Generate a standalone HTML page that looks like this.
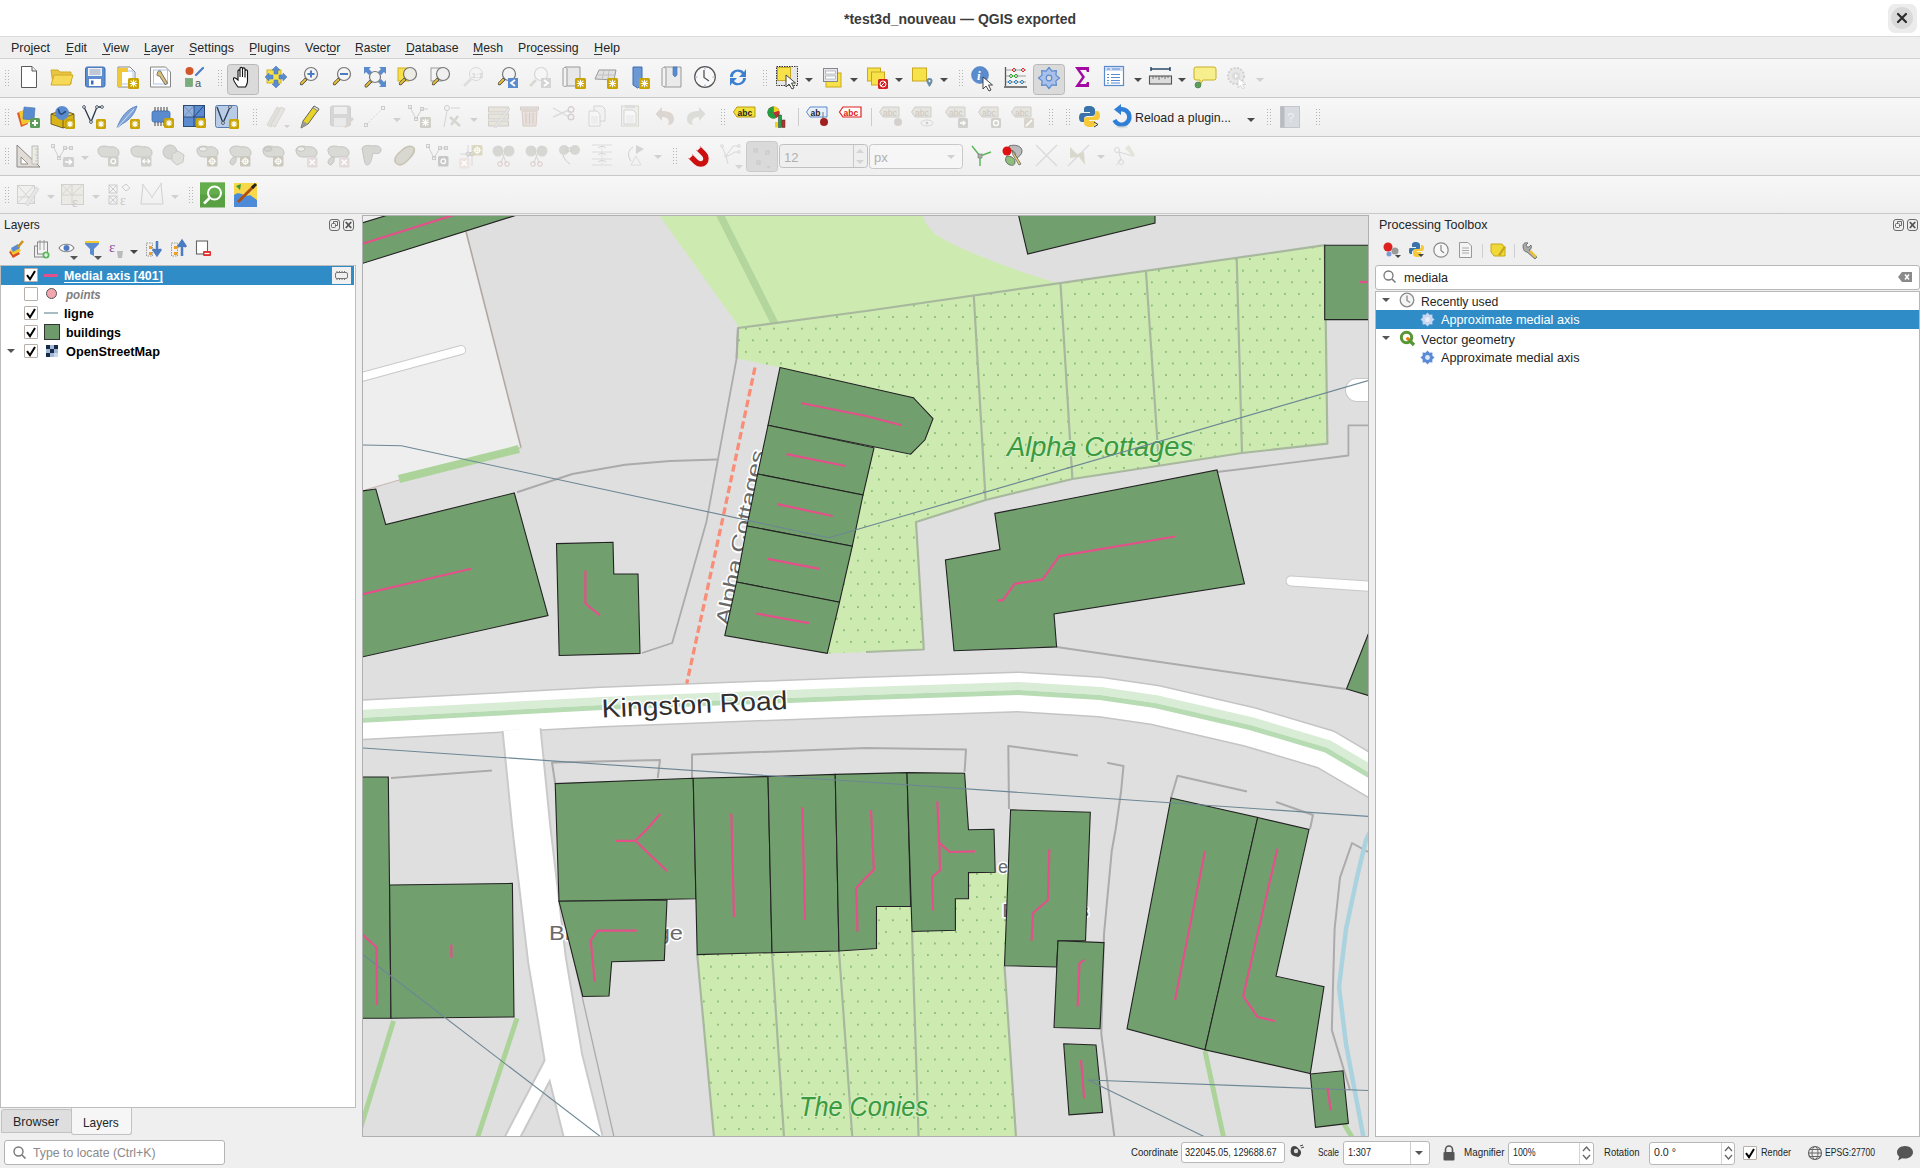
<!DOCTYPE html>
<html><head><meta charset="utf-8">
<style>
*{box-sizing:border-box;margin:0;padding:0}
html,body{width:1920px;height:1168px;overflow:hidden;background:#efefef;font-family:"Liberation Sans",sans-serif;color:#232627;position:relative}
.a{position:absolute}
.t{position:absolute;white-space:nowrap;font-size:13px;line-height:16px}
#title{left:0;top:0;width:1920px;height:37px;background:#fff;border-bottom:1px solid #dcdcdc}
#title .tx{position:absolute;left:0;width:1920px;top:9px;text-align:center;font-size:15px;font-weight:bold;color:#2a2a2a;letter-spacing:0.1px}
#menu{left:0;top:37px;width:1920px;height:22px;background:#efefef;border-bottom:1px solid #d2d2d2}
#menu span{position:absolute;top:3px;font-size:13px;color:#232627}
.tb{left:0;width:1920px;background:linear-gradient(#f7f7f7,#efefef);border-bottom:1px solid #c8c8c8}
.grip{position:absolute;width:3px;height:16px;background-image:radial-gradient(circle,#b0b0b0 0.8px,transparent 1px);background-size:3px 3px}
</style></head><body>
<div class="a" id="title"></div><div class="t" style="left:844.0px;top:11.1px;font-size:15px;line-height:15px;color:#3b3b3b;font-weight:bold;transform:scaleX(0.934);transform-origin:0 0;">*test3d_nouveau — QGIS exported</div>
<div class="a" style="left:1888px;top:4px;width:29px;height:29px;border-radius:7px;background:#ececec"></div><div class="a" style="left:1891px;top:7px;width:22px;height:22px;border-radius:11px;background:#d9d9d9"></div><svg class="a" style="left:1891px;top:7px" width="22" height="22"><path d="M7 7L15 15M15 7L7 15" stroke="#2a2a2a" stroke-width="2.2" stroke-linecap="round"/></svg><div class="a" id="menu"></div><div class="t" style="left:11.0px;top:40.7px;font-size:13px;line-height:13px;color:#232627;transform:scaleX(0.964);transform-origin:0 0;">Project</div>
<div class="t" style="left:65.8px;top:40.7px;font-size:13px;line-height:13px;color:#232627;transform:scaleX(0.938);transform-origin:0 0;">Edit</div>
<div class="t" style="left:102.5px;top:40.7px;font-size:13px;line-height:13px;color:#232627;transform:scaleX(0.931);transform-origin:0 0;">View</div>
<div class="t" style="left:144.0px;top:40.7px;font-size:13px;line-height:13px;color:#232627;transform:scaleX(0.923);transform-origin:0 0;">Layer</div>
<div class="t" style="left:189.0px;top:40.7px;font-size:13px;line-height:13px;color:#232627;transform:scaleX(0.958);transform-origin:0 0;">Settings</div>
<div class="t" style="left:249.0px;top:40.7px;font-size:13px;line-height:13px;color:#232627;transform:scaleX(0.962);transform-origin:0 0;">Plugins</div>
<div class="t" style="left:305.0px;top:40.7px;font-size:13px;line-height:13px;color:#232627;transform:scaleX(0.963);transform-origin:0 0;">Vector</div>
<div class="t" style="left:355.0px;top:40.7px;font-size:13px;line-height:13px;color:#232627;transform:scaleX(0.927);transform-origin:0 0;">Raster</div>
<div class="t" style="left:405.5px;top:40.7px;font-size:13px;line-height:13px;color:#232627;transform:scaleX(0.943);transform-origin:0 0;">Database</div>
<div class="t" style="left:473.0px;top:40.7px;font-size:13px;line-height:13px;color:#232627;transform:scaleX(0.944);transform-origin:0 0;">Mesh</div>
<div class="t" style="left:518.0px;top:40.7px;font-size:13px;line-height:13px;color:#232627;transform:scaleX(0.941);transform-origin:0 0;">Processing</div>
<div class="t" style="left:594.0px;top:40.7px;font-size:13px;line-height:13px;color:#232627;transform:scaleX(0.973);transform-origin:0 0;">Help</div>
<div class="a" style="left:29px;top:54px;width:3.5px;height:1px;background:#3a3a3a"></div><div class="a" style="left:65px;top:54px;width:7px;height:1px;background:#3a3a3a"></div><div class="a" style="left:102px;top:54px;width:8px;height:1px;background:#3a3a3a"></div><div class="a" style="left:144px;top:54px;width:6px;height:1px;background:#3a3a3a"></div><div class="a" style="left:189px;top:54px;width:6px;height:1px;background:#3a3a3a"></div><div class="a" style="left:249.5px;top:54px;width:6.5px;height:1px;background:#3a3a3a"></div><div class="a" style="left:328px;top:54px;width:7.800000000000011px;height:1px;background:#3a3a3a"></div><div class="a" style="left:355px;top:54px;width:7px;height:1px;background:#3a3a3a"></div><div class="a" style="left:405.3px;top:54px;width:8.899999999999977px;height:1px;background:#3a3a3a"></div><div class="a" style="left:473.3px;top:54px;width:9.5px;height:1px;background:#3a3a3a"></div><div class="a" style="left:537px;top:54px;width:5.7999999999999545px;height:1px;background:#3a3a3a"></div><div class="a" style="left:594.2px;top:54px;width:8.299999999999955px;height:1px;background:#3a3a3a"></div><div class="a tb" style="top:59px;height:39px"></div><div class="a tb" style="top:98px;height:39px"></div><div class="a tb" style="top:137px;height:39px"></div><div class="a tb" style="top:176px;height:38px"></div><svg class="a" style="left:0;top:0" width="1920" height="260" viewBox="0 0 1920 260"><rect x="5" y="70" width="1" height="1" fill="#b4b4b4"/><rect x="8" y="70" width="1" height="1" fill="#b4b4b4"/><rect x="5" y="73" width="1" height="1" fill="#b4b4b4"/><rect x="8" y="73" width="1" height="1" fill="#b4b4b4"/><rect x="5" y="76" width="1" height="1" fill="#b4b4b4"/><rect x="8" y="76" width="1" height="1" fill="#b4b4b4"/><rect x="5" y="79" width="1" height="1" fill="#b4b4b4"/><rect x="8" y="79" width="1" height="1" fill="#b4b4b4"/><rect x="5" y="82" width="1" height="1" fill="#b4b4b4"/><rect x="8" y="82" width="1" height="1" fill="#b4b4b4"/><rect x="5" y="85" width="1" height="1" fill="#b4b4b4"/><rect x="8" y="85" width="1" height="1" fill="#b4b4b4"/><g transform="translate(21,66)"><path d="M0.5 0.5H11L15.5 5V21.5H0.5Z" fill="#fff" stroke="#5a5a5a"/><path d="M11 0.5V5H15.5" fill="#eee" stroke="#5a5a5a"/></g>
<g transform="translate(50,66)"><path d="M1 4H8L10 6H21V18H3Z" fill="#e8c547" stroke="#d0aa20"/><path d="M1 19L4 9H23L20 19Z" fill="#f7d95a" stroke="#d0aa20"/></g>
<g transform="translate(85,66)"><rect x="0.5" y="1" width="19.5" height="20" rx="2" fill="#5d8fd0" stroke="#3d6db2"/><rect x="3" y="2" width="14" height="8" fill="#eef2f8"/><path d="M4.5 4H15.5M4.5 6H15.5M4.5 8H15.5" stroke="#7a8aa0" stroke-width="0.8"/><rect x="4" y="13" width="12" height="7" fill="#fff"/><rect x="6" y="14.5" width="2.5" height="4" fill="#3d6db2"/></g>
<g transform="translate(116,66)"><path d="M2 1H14L19 6V21H2Z" fill="#fff" stroke="#888"/><rect x="5" y="5" width="12" height="13" fill="none" stroke="#9ab4e8" stroke-width="0.8"/><rect x="2" y="2" width="4" height="19" fill="#f0c93a"/><rect x="2" y="2" width="10" height="4" fill="#f0c93a"/><rect x="12" y="12" width="11" height="11" rx="1.5" fill="#c9a400"/><path d="M17.5 13.8V21.2M13.8 17.5H21.2M14.6 14.6L20.4 20.4M20.4 14.6L14.6 20.4" stroke="#fff" stroke-width="1.1"/></g>
<g transform="translate(149.5,66)"><path d="M1 1H16L21 6V21H1Z" fill="#fff" stroke="#888"/><rect x="4" y="4" width="14" height="14" fill="none" stroke="#9ab4e8" stroke-width="0.8"/><path d="M8 7C8 4 12 4 12 7L18 17L16 19L10 10C7 10 7 9 8 7Z" fill="#d9c07a" stroke="#555" stroke-width="0.8"/></g>
<g transform="translate(184,66)"><circle cx="5.5" cy="5" r="4" fill="#d1562a"/><path d="M12 9L19 2" stroke="#4d7bc0" stroke-width="2.2" stroke-linecap="round"/><rect x="1.5" y="12.5" width="7" height="8" fill="#7bac7b" stroke="#6a9a6a" stroke-width="0.6"/><text x="11" y="20.5" font-family="Liberation Sans" font-size="11" fill="#555">a</text></g>
<rect x="218" y="70" width="1" height="1" fill="#b4b4b4"/><rect x="221" y="70" width="1" height="1" fill="#b4b4b4"/><rect x="218" y="73" width="1" height="1" fill="#b4b4b4"/><rect x="221" y="73" width="1" height="1" fill="#b4b4b4"/><rect x="218" y="76" width="1" height="1" fill="#b4b4b4"/><rect x="221" y="76" width="1" height="1" fill="#b4b4b4"/><rect x="218" y="79" width="1" height="1" fill="#b4b4b4"/><rect x="221" y="79" width="1" height="1" fill="#b4b4b4"/><rect x="218" y="82" width="1" height="1" fill="#b4b4b4"/><rect x="221" y="82" width="1" height="1" fill="#b4b4b4"/><rect x="218" y="85" width="1" height="1" fill="#b4b4b4"/><rect x="221" y="85" width="1" height="1" fill="#b4b4b4"/><rect x="227.5" y="64.5" width="31" height="30" rx="3" fill="#dadada" stroke="#b9b9b9"/><g transform="translate(232,66)"><path d="M6 21C3 17 1 14 1.5 12.5C2 11 4 12 6 14V5C6 3.5 8 3.5 8 5V11V2.5C8 1 10.5 1 10.5 2.5V11V3C10.5 1.5 13 1.5 13 3V11.5V5C13 3.5 15.5 3.5 15.5 5V15C15.5 18 14 20 13.5 21Z" fill="#fff" stroke="#111" stroke-width="1.1"/></g>
<g transform="translate(265,66)"><rect x="2" y="4" width="14" height="13" fill="#f7e14a" stroke="#d0b020"/><path d="M11 0L15 4H13V8H9V4H7ZM11 22L15 18H13V14H9V18H7ZM0 11L4 7V9H8V13H4V15ZM22 11L18 7V9H14V13H18V15Z" fill="#5b8bcf" stroke="#4371b3" stroke-width="0.5"/></g>
<g transform="translate(297,66)"><path d="M9.45 12.55L4.449999999999999 17.55" stroke="#333" stroke-width="3.2" stroke-linecap="round"/><path d="M8.25 13.75L4.449999999999999 17.55" stroke="#e8c13a" stroke-width="2" stroke-linecap="round"/><circle cx="14" cy="8" r="6.5" fill="#f4f4f4" stroke="#777" stroke-width="1.2"/><path d="M14 4.5V11.5M10.5 8H17.5" stroke="#4d7bc0" stroke-width="2"/></g>
<g transform="translate(330,66)"><path d="M9.45 12.55L4.449999999999999 17.55" stroke="#333" stroke-width="3.2" stroke-linecap="round"/><path d="M8.25 13.75L4.449999999999999 17.55" stroke="#e8c13a" stroke-width="2" stroke-linecap="round"/><circle cx="14" cy="8" r="6.5" fill="#f4f4f4" stroke="#777" stroke-width="1.2"/><path d="M10 8H18" stroke="#4d7bc0" stroke-width="2"/></g>
<g transform="translate(363,66)"><path d="M1 1H8L6 3L9 6L6 9L3 6L1 8ZM23 1H16L18 3L15 6L18 9L21 6L23 8ZM23 21H16L18 19L15 16L18 13L21 16L23 14Z" fill="#5b8bcf"/><path d="M8.15 14.85L3.1500000000000004 19.85" stroke="#333" stroke-width="3.2" stroke-linecap="round"/><path d="M6.95 16.05L3.1500000000000004 19.85" stroke="#e8c13a" stroke-width="2" stroke-linecap="round"/><circle cx="12" cy="11" r="5.5" fill="#f4f4f4" stroke="#777" stroke-width="1.2"/></g>
<g transform="translate(396,66)"><rect x="2" y="2" width="11" height="13" fill="#f7e14a" stroke="#d0b020"/><path d="M9.45 12.55L4.449999999999999 17.55" stroke="#333" stroke-width="3.2" stroke-linecap="round"/><path d="M8.25 13.75L4.449999999999999 17.55" stroke="#e8c13a" stroke-width="2" stroke-linecap="round"/><circle cx="14" cy="8" r="6.5" fill="#ecebe4" stroke="#777" stroke-width="1.2"/></g>
<g transform="translate(429,66)"><rect x="2" y="2" width="11" height="13" fill="#f4f4f4" stroke="#999"/><path d="M9.45 12.55L4.449999999999999 17.55" stroke="#333" stroke-width="3.2" stroke-linecap="round"/><path d="M8.25 13.75L4.449999999999999 17.55" stroke="#e8c13a" stroke-width="2" stroke-linecap="round"/><circle cx="14" cy="8" r="6.5" fill="#f0f0f0" stroke="#777" stroke-width="1.2"/></g>
<g transform="translate(462,66)"><circle cx="14" cy="8" r="6.5" fill="#f4f4f4" stroke="#d8d8d8"/><path d="M2 20L9 13" stroke="#ddd" stroke-width="2.5"/><text x="9.5" y="11.5" font-family="Liberation Sans" font-size="8" font-weight="bold" fill="#d4d4d4">1:1</text></g>
<g transform="translate(495,66)"><path d="M9.45 12.55L4.449999999999999 17.55" stroke="#333" stroke-width="3.2" stroke-linecap="round"/><path d="M8.25 13.75L4.449999999999999 17.55" stroke="#e8c13a" stroke-width="2" stroke-linecap="round"/><circle cx="14" cy="8" r="6.5" fill="#f4f4f4" stroke="#777" stroke-width="1.2"/><rect x="13" y="12" width="10" height="10" fill="#5b8bcf"/><path d="M20 14L16 17L20 20" fill="none" stroke="#fff" stroke-width="1.8"/></g>
<g transform="translate(528,66)"><circle cx="13" cy="8" r="6.5" fill="#f6f6f6" stroke="#d6d6d6" stroke-width="1.2"/><path d="M2 20L8 14" stroke="#d8d8d2" stroke-width="2.5"/><rect x="13" y="12" width="10" height="10" fill="#d4d4d4"/><path d="M16 14L20 17L16 20" fill="none" stroke="#fff" stroke-width="1.8"/></g>
<g transform="translate(562,66)"><path d="M3 1H18V20H3Z" fill="#e8e8e8" stroke="#999"/><path d="M1 3C1 1 5 1 5 3V19C5 21 1 21 1 19Z" fill="#f2f2f2" stroke="#999"/><rect x="13" y="12" width="11" height="11" rx="1.5" fill="#c9a400"/><path d="M18.5 13.8V21.2M14.8 17.5H22.2M15.6 14.6L21.4 20.4M21.4 14.6L15.6 20.4" stroke="#fff" stroke-width="1.1"/></g>
<g transform="translate(594,66)"><path d="M1 13L5 4H22L20 14Z" fill="#e0e0e0" stroke="#999"/><path d="M4 9L21 9M10 4L8 14M15 4L14 14" stroke="#bbb" stroke-width="0.8"/><rect x="13" y="12" width="11" height="11" rx="1.5" fill="#c9a400"/><path d="M18.5 13.8V21.2M14.8 17.5H22.2M15.6 14.6L21.4 20.4M21.4 14.6L15.6 20.4" stroke="#fff" stroke-width="1.1"/></g>
<g transform="translate(632,66)"><path d="M1 1H10V19L5.5 22L1 19Z" fill="#6a99d4" stroke="#3d6db2"/><rect x="7" y="12" width="11" height="11" rx="1.5" fill="#c9a400"/><path d="M12.5 13.8V21.2M8.8 17.5H16.2M9.6 14.6L15.4 20.4M15.4 14.6L9.6 20.4" stroke="#fff" stroke-width="1.1"/></g>
<g transform="translate(661,66)"><path d="M3 1H20V21H3Z" fill="#eaeaea" stroke="#999"/><path d="M1 3C1 1 5 1 5 3V19C5 21 1 21 1 19Z" fill="#f2f2f2" stroke="#999"/><path d="M12 1H16V9L14 11L12 9Z" fill="#5b8bcf" stroke="#3d6db2" stroke-width="0.6"/></g>
<g transform="translate(694,66)"><circle cx="11" cy="11" r="10.3" fill="#f8f8f8" stroke="#555" stroke-width="1.2"/><path d="M10 4V11.5L15 15" fill="none" stroke="#555" stroke-width="1.3"/><circle cx="11" cy="2.8" r="0.6" fill="#4d7bc0"/><circle cx="19.2" cy="11" r="0.6" fill="#4d7bc0"/><circle cx="11" cy="19.2" r="0.6" fill="#4d7bc0"/><circle cx="2.8" cy="11" r="0.6" fill="#4d7bc0"/></g>
<g transform="translate(727,66)"><path d="M3 11C3 4 12 1 17 6L19 3V11H12L15 8C12 4 6 6 6 11Z" fill="#3c7fd0"/><path d="M19 12C19 18 10 22 5 17L3 20V12H10L7 15C10 19 16 17 16 12Z" fill="#3c7fd0"/></g>
<rect x="763" y="70" width="1" height="1" fill="#b4b4b4"/><rect x="766" y="70" width="1" height="1" fill="#b4b4b4"/><rect x="763" y="73" width="1" height="1" fill="#b4b4b4"/><rect x="766" y="73" width="1" height="1" fill="#b4b4b4"/><rect x="763" y="76" width="1" height="1" fill="#b4b4b4"/><rect x="766" y="76" width="1" height="1" fill="#b4b4b4"/><rect x="763" y="79" width="1" height="1" fill="#b4b4b4"/><rect x="766" y="79" width="1" height="1" fill="#b4b4b4"/><rect x="763" y="82" width="1" height="1" fill="#b4b4b4"/><rect x="766" y="82" width="1" height="1" fill="#b4b4b4"/><rect x="763" y="85" width="1" height="1" fill="#b4b4b4"/><rect x="766" y="85" width="1" height="1" fill="#b4b4b4"/><g transform="translate(776,66)"><rect x="0.5" y="0.5" width="21" height="19" fill="#e6e6e6" stroke="#333" stroke-dasharray="1.5 1"/><rect x="1.5" y="1.5" width="13" height="13" fill="#f8e24a" stroke="#c8a820"/><path d="M10 9V21L13 18L16 23L18 22L15.5 17H19.5Z" fill="#fff" stroke="#333" stroke-width="0.9"/></g>
<path d="M805 78H813L809 82Z" fill="#4a4a4a"/><g transform="translate(823,66)"><rect x="3" y="7" width="15" height="14" fill="#f8e24a" stroke="#c8a820"/><rect x="0.5" y="2.5" width="14" height="13" fill="#e4e8ee" stroke="#888"/><rect x="2.5" y="5" width="10" height="3" fill="#fff" stroke="#999" stroke-width="0.6"/><rect x="2.5" y="10" width="10" height="3" fill="#fff" stroke="#999" stroke-width="0.6"/></g>
<path d="M850 78H858L854 82Z" fill="#4a4a4a"/><g transform="translate(867,66)"><rect x="0.5" y="2" width="13" height="13" fill="#f8e24a" stroke="#c8a820"/><rect x="4.5" y="6" width="13" height="13" fill="#f8e24a" stroke="#c8a820"/><rect x="11" y="13" width="10" height="10" rx="1.5" fill="#d42020"/><circle cx="16" cy="18" r="3" fill="none" stroke="#fff" stroke-width="1"/><path d="M14 20L18 16" stroke="#fff"/></g>
<path d="M895 78H903L899 82Z" fill="#4a4a4a"/><g transform="translate(912,66)"><rect x="0.5" y="2" width="14" height="13" fill="#f8e24a" stroke="#c8a820"/><path d="M17.5 12A3 3 0 0 1 20.5 15C20.5 17 17.5 21 17.5 21S14.5 17 14.5 15A3 3 0 0 1 17.5 12Z" fill="#6a8ea8"/><circle cx="17.5" cy="15" r="1" fill="#fff"/></g>
<path d="M940 78H948L944 82Z" fill="#4a4a4a"/><rect x="959" y="70" width="1" height="1" fill="#b4b4b4"/><rect x="962" y="70" width="1" height="1" fill="#b4b4b4"/><rect x="959" y="73" width="1" height="1" fill="#b4b4b4"/><rect x="962" y="73" width="1" height="1" fill="#b4b4b4"/><rect x="959" y="76" width="1" height="1" fill="#b4b4b4"/><rect x="962" y="76" width="1" height="1" fill="#b4b4b4"/><rect x="959" y="79" width="1" height="1" fill="#b4b4b4"/><rect x="962" y="79" width="1" height="1" fill="#b4b4b4"/><rect x="959" y="82" width="1" height="1" fill="#b4b4b4"/><rect x="962" y="82" width="1" height="1" fill="#b4b4b4"/><rect x="959" y="85" width="1" height="1" fill="#b4b4b4"/><rect x="962" y="85" width="1" height="1" fill="#b4b4b4"/><g transform="translate(971,66)"><circle cx="9" cy="9" r="8.5" fill="#5b8bcf" stroke="#4371b3" stroke-width="0.5"/><text x="6" y="14" font-family="Liberation Serif" font-style="italic" font-weight="bold" font-size="13" fill="#fff">i</text><path d="M12 11V23L15 20L18 25L20 24L17.5 19H21.5Z" fill="#fff" stroke="#333" stroke-width="0.9"/></g>
<g transform="translate(1004,66)"><path d="M1.5 1V20M0 21H23" stroke="#555" stroke-width="1.3"/><path d="M1.5 4H22M1.5 10H22M1.5 16H22" stroke="#888" stroke-width="0.8"/><path d="M8 4L10 2L12 4L10 6ZM17 4L19 2L21 4L19 6Z" fill="none" stroke="#d33" stroke-width="1"/><path d="M5 10L7 8L9 10L7 12ZM10 10L12 8L14 10L12 12Z" fill="none" stroke="#3a3" stroke-width="1"/><path d="M4 16L6 14L8 16L6 18ZM10 16L12 14L14 16L12 18ZM16 16L18 14L20 16L18 18Z" fill="none" stroke="#38c" stroke-width="1"/></g>
<rect x="1033.5" y="64.5" width="31" height="30" rx="3" fill="#dadada" stroke="#b9b9b9"/><polygon points="1059.5,78.0 1055.9,80.9 1056.4,85.4 1051.9,84.9 1049.0,88.5 1046.1,84.9 1041.6,85.4 1042.1,80.9 1038.5,78.0 1042.1,75.1 1041.6,70.6 1046.1,71.1 1049.0,67.5 1051.9,71.1 1056.4,70.6 1055.9,75.1" fill="#a9c1ea" stroke="#5b8bcf" stroke-width="1.2" stroke-linejoin="round"/><circle cx="1049" cy="78" r="2.8" fill="#dadada" stroke="#5b8bcf" stroke-width="1.2"/><g transform="translate(1074,66)"><path d="M1 1H15V6H13L12 4H6L11 11L6 18H12L13 16H15V21H1L8 11Z" fill="#a30aa3"/></g>
<g transform="translate(1104,66)"><rect x="0.5" y="0.5" width="19" height="19" fill="#fff" stroke="#5b8bcf" stroke-width="1.2"/><rect x="1" y="1" width="18" height="4" fill="#cfdcf3"/><path d="M3 3H6M8 3H16" stroke="#5b8bcf" stroke-width="1.2"/><path d="M3 8.5H5M7 8.5H16M3 11.5H5M7 11.5H16M3 14.5H5M7 14.5H16M3 17H5M7 17H16" stroke="#5b8bcf" stroke-width="1"/></g>
<path d="M1134 78H1142L1138 82Z" fill="#4a4a4a"/><g transform="translate(1149,66)"><path d="M2 3H21M2 1V5M21 1V5" stroke="#2a4a6a" stroke-width="1.5"/><rect x="0.5" y="10" width="22" height="8" fill="#dcdcdc" stroke="#555" stroke-width="1.1"/><path d="M4 10V13M7 10V12M10 10V14M13 10V12M16 10V13M19 10V12" stroke="#555" stroke-width="0.8"/></g>
<path d="M1178 78H1186L1182 82Z" fill="#4a4a4a"/><g transform="translate(1193,66)"><path d="M3 1H21A2 2 0 0 1 23 3V12A2 2 0 0 1 21 14H10L7 19L7 14H3A2 2 0 0 1 1 12V3A2 2 0 0 1 3 1Z" fill="#f7ef8e" stroke="#c8b020" stroke-width="1"/><circle cx="5" cy="19" r="3" fill="#5b9b5b" stroke="#3d7a3d" stroke-width="0.6"/></g>
<g transform="translate(1226,66)"><circle cx="10" cy="10" r="8" fill="#e8e8e8" stroke="#d0d0d0" stroke-width="2" stroke-dasharray="2 1.5"/><circle cx="10" cy="10" r="4" fill="#dcdcdc"/><path d="M9 8L12 10L9 12Z" fill="#fff"/><path d="M12 12V22L14.5 19.5L17 23L18.5 22L16.5 18.5H20Z" fill="#fff" stroke="#d4d4d4" stroke-width="0.9"/></g>
<path d="M1256 78H1264L1260 82Z" fill="#d0d0d0"/><rect x="5" y="109" width="1" height="1" fill="#b4b4b4"/><rect x="8" y="109" width="1" height="1" fill="#b4b4b4"/><rect x="5" y="112" width="1" height="1" fill="#b4b4b4"/><rect x="8" y="112" width="1" height="1" fill="#b4b4b4"/><rect x="5" y="115" width="1" height="1" fill="#b4b4b4"/><rect x="8" y="115" width="1" height="1" fill="#b4b4b4"/><rect x="5" y="118" width="1" height="1" fill="#b4b4b4"/><rect x="8" y="118" width="1" height="1" fill="#b4b4b4"/><rect x="5" y="121" width="1" height="1" fill="#b4b4b4"/><rect x="8" y="121" width="1" height="1" fill="#b4b4b4"/><rect x="5" y="124" width="1" height="1" fill="#b4b4b4"/><rect x="8" y="124" width="1" height="1" fill="#b4b4b4"/><g transform="translate(16,105)"><path d="M1 8L8 5L12 19L5 22Z" fill="#e05a28"/><path d="M3 7L11 4L14 17L6 20Z" fill="#f0c830"/><path d="M8 2L19 3L18 15L7 14Z" fill="#5b8bcf" stroke="#4371b3" stroke-width="0.6"/><rect x="14" y="13" width="10" height="10" rx="1.5" fill="#5b9b5b"/><path d="M19 15V21M16 18H22" stroke="#fff" stroke-width="2"/></g>
<g transform="translate(50,105)"><path d="M1 9L13 5L24 9V19L13 23L1 19Z" fill="#d8b418" stroke="#5a4a10" stroke-width="0.8"/><path d="M1 9L13 13L24 9" fill="#f8e060" stroke="#5a4a10" stroke-width="0.8"/><path d="M13 13V23" stroke="#5a4a10" stroke-width="0.8"/><circle cx="12" cy="8" r="7" fill="#5b8bcf"/><path d="M8 4C10 6 8 8 11 9C13 10 14 6 16 7" fill="none" stroke="#2a4a7a" stroke-width="1.6"/><rect x="15" y="14" width="10" height="10" rx="1.5" fill="#c9a400"/><path d="M20.0 15.8V22.2M16.8 19.0H23.2M17.6 16.6L22.4 21.4M22.4 16.6L17.6 21.4" stroke="#fff" stroke-width="1.1"/></g>
<g transform="translate(82,105)"><path d="M2 2L9 17L15 2L20 2" fill="none" stroke="#2b3a4a" stroke-width="1.3"/><circle cx="2" cy="2" r="1.4" fill="#fff" stroke="#2b3a4a" stroke-width="0.8"/><circle cx="9" cy="17" r="1.4" fill="#fff" stroke="#2b3a4a" stroke-width="0.8"/><circle cx="15" cy="2" r="1.4" fill="#fff" stroke="#2b3a4a" stroke-width="0.8"/><circle cx="20" cy="2" r="1.4" fill="#fff" stroke="#2b3a4a" stroke-width="0.8"/><rect x="14" y="14" width="10" height="10" rx="1.5" fill="#c9a400"/><path d="M19.0 15.8V22.2M15.8 19.0H22.2M16.6 16.6L21.4 21.4M21.4 16.6L16.6 21.4" stroke="#fff" stroke-width="1.1"/></g>
<g transform="translate(116,105)"><path d="M1 23C4 14 10 4 21 1C19 8 14 15 6 19Z" fill="#7fa5d8" stroke="#4d7bc0" stroke-width="0.8"/><path d="M1 23L18 4" stroke="#e8eef8" stroke-width="0.8"/><rect x="14" y="14" width="10" height="10" rx="1.5" fill="#c9a400"/><path d="M19.0 15.8V22.2M15.8 19.0H22.2M16.6 16.6L21.4 21.4M21.4 16.6L16.6 21.4" stroke="#fff" stroke-width="1.1"/></g>
<g transform="translate(151,105)"><rect x="1" y="6" width="18" height="11" rx="2" fill="#5b8bcf" stroke="#3d6db2" stroke-width="0.8"/><path d="M4 2V6M7 2V6M10 2V6M13 2V6M16 2V6M4 17V21M7 17V21M10 17V21M13 17V21" stroke="#333" stroke-width="0.9"/><rect x="13" y="13" width="10" height="10" rx="1.5" fill="#c9a400"/><path d="M18.0 14.8V21.2M14.8 18.0H21.2M15.6 15.6L20.4 20.4M20.4 15.6L15.6 20.4" stroke="#fff" stroke-width="1.1"/></g>
<g transform="translate(183,105)"><rect x="0.5" y="0.5" width="21" height="21" fill="#5b8bcf" stroke="#2a4a7a" stroke-width="1"/><path d="M0.5 12H21M11 0.5V21M0.5 0.5L11 12M11 0.5L0.5 12M11 12L21 0.5" stroke="#2a4a7a" stroke-width="1"/><rect x="1" y="1" width="9.5" height="10.5" fill="#c8d8f0" opacity="0.5"/><rect x="13" y="13" width="10" height="10" rx="1.5" fill="#c9a400"/><path d="M18.0 14.8V21.2M14.8 18.0H21.2M15.6 15.6L20.4 20.4M20.4 15.6L15.6 20.4" stroke="#fff" stroke-width="1.1"/></g>
<g transform="translate(215,105)"><rect x="0.5" y="0.5" width="22" height="22" rx="2" fill="#b8cce8" stroke="#5b7bb0" stroke-width="1"/><path d="M2 2L8 18L15 2" fill="none" stroke="#2b3a4a" stroke-width="1.3"/><circle cx="8" cy="18" r="1.4" fill="#fff" stroke="#2b3a4a" stroke-width="0.8"/><circle cx="15" cy="2" r="1.4" fill="#fff" stroke="#2b3a4a" stroke-width="0.8"/><rect x="14" y="14" width="10" height="10" rx="1.5" fill="#c9a400"/><path d="M19.0 15.8V22.2M15.8 19.0H22.2M16.6 16.6L21.4 21.4M21.4 16.6L16.6 21.4" stroke="#fff" stroke-width="1.1"/></g>
<rect x="253" y="109" width="1" height="1" fill="#b4b4b4"/><rect x="256" y="109" width="1" height="1" fill="#b4b4b4"/><rect x="253" y="112" width="1" height="1" fill="#b4b4b4"/><rect x="256" y="112" width="1" height="1" fill="#b4b4b4"/><rect x="253" y="115" width="1" height="1" fill="#b4b4b4"/><rect x="256" y="115" width="1" height="1" fill="#b4b4b4"/><rect x="253" y="118" width="1" height="1" fill="#b4b4b4"/><rect x="256" y="118" width="1" height="1" fill="#b4b4b4"/><rect x="253" y="121" width="1" height="1" fill="#b4b4b4"/><rect x="256" y="121" width="1" height="1" fill="#b4b4b4"/><rect x="253" y="124" width="1" height="1" fill="#b4b4b4"/><rect x="256" y="124" width="1" height="1" fill="#b4b4b4"/><g transform="translate(265,105)"><path d="M2 20L12 2L16 4L6 22Z" fill="#e2e0dc" stroke="#d4d2ce" stroke-width="0.8"/><path d="M6 20L16 2L20 4L10 22Z" fill="#e6e4e0" stroke="#d4d2ce" stroke-width="0.8"/><path d="M19 20H25L22 23Z" fill="#d0d0d0"/></g>
<g transform="translate(300,105)"><path d="M1 23L3 16L14 1L19 4L8 19Z" fill="#e8d428" stroke="#555" stroke-width="0.9"/><path d="M1 23L3 16L8 19Z" fill="#999"/><path d="M14 1L19 4L18 6L13 3Z" fill="#ddd" stroke="#555" stroke-width="0.6"/></g>
<g transform="translate(330,105)"><rect x="0.5" y="1" width="20" height="20" rx="2" fill="#d6d6d6" stroke="#cfcfcf"/><rect x="4" y="2" width="13" height="7" fill="#eee"/><rect x="4" y="13" width="12" height="8" fill="#eaeaea"/><path d="M14 22L22 12L24 14L16 23Z" fill="#ddd6cf"/></g>
<g transform="translate(364,105)"><path d="M2 20L19 3" stroke="#d6d6d6" stroke-width="1" stroke-dasharray="2 1.5"/><rect x="0.5" y="18.5" width="3" height="3" fill="none" stroke="#ccc"/><rect x="17.5" y="1.5" width="3" height="3" fill="none" stroke="#ccc"/></g>
<path d="M393 118H401L397 122Z" fill="#d0d0d0"/><g transform="translate(408,105)"><path d="M2 2L8 14L14 4H20" fill="none" stroke="#d0d0d0" stroke-width="1"/><rect x="0.5" y="0.5" width="3" height="3" fill="none" stroke="#ccc"/><rect x="6.5" y="12.5" width="3" height="3" fill="none" stroke="#ccc"/><rect x="12.5" y="2.5" width="3" height="3" fill="none" stroke="#ccc"/><rect x="12" y="12" width="11" height="11" rx="1.5" fill="#cfcfc8"/><path d="M17.5 13.8V21.2M13.8 17.5H21.2M14.6 14.6L20.4 20.4M20.4 14.6L14.6 20.4" stroke="#fff" stroke-width="1.1"/></g>
<g transform="translate(442,105)"><circle cx="5" cy="3" r="2.5" fill="none" stroke="#ccc"/><path d="M9 3H18M5 6L2 22" stroke="#d4d4d4" stroke-width="1"/><path d="M8 12L18 21M16 11L9 20" stroke="#d6d6d0" stroke-width="2.5"/></g>
<path d="M470 118H478L474 122Z" fill="#d0d0d0"/><g transform="translate(488,105)"><rect x="0.5" y="2" width="20" height="5" fill="#e6e4dc" stroke="#d0cec6"/><rect x="0.5" y="9" width="20" height="5" fill="#e6e4dc" stroke="#d0cec6"/><rect x="0.5" y="16" width="20" height="5" fill="#e6e4dc" stroke="#d0cec6"/><path d="M6 22L20 3L22 4L8 23Z" fill="#e8e8e8" stroke="#ccc" stroke-width="0.6"/></g>
<g transform="translate(520,105)"><rect x="0.5" y="2" width="18" height="3" fill="#e2dcd8" stroke="#d6cfcb"/><path d="M2 6H17L16 21H3Z" fill="#e8e0dc" stroke="#d8ccc6"/><path d="M6 8V19M9.5 8V19M13 8V19" stroke="#d4c6c0"/></g>
<g transform="translate(552,105)"><path d="M1 3L17 12M1 12L17 5" stroke="#dcdcdc" stroke-width="1.4"/><circle cx="19" cy="4.5" r="2.8" fill="none" stroke="#d8d0d0" stroke-width="1.4"/><circle cx="19" cy="12" r="2.8" fill="none" stroke="#d8d0d0" stroke-width="1.4"/></g>
<g transform="translate(588,105)"><path d="M6 1H14L17 4V16H6Z" fill="#f2f2f2" stroke="#d4d4d4"/><path d="M1 6H9L12 9V21H1Z" fill="#f6f6f6" stroke="#d4d4d4"/><path d="M3 12H10M3 14H10M3 16H10M3 18H10" stroke="#ddd" stroke-width="0.7"/></g>
<g transform="translate(621,105)"><rect x="0.5" y="1" width="17" height="20" fill="#eeeeea" stroke="#d8d8d2"/><rect x="4" y="0" width="10" height="3" fill="#ddd"/><path d="M3 5H12L15 8V19H3Z" fill="#f8f8f8" stroke="#d4d4d4"/><path d="M5 11H13M5 13H13M5 15H13M5 17H13" stroke="#ddd" stroke-width="0.7"/></g>
<g transform="translate(655,105)"><path d="M0.5 9L7 2V6C14 6 19 8 19 14C19 18 16 20 13 20C15 17 14 12 7 12V16Z" fill="#dcd6d2"/></g>
<g transform="translate(686,105)"><path d="M19.5 9L13 2V6C6 6 1 8 1 14C1 18 4 20 7 20C5 17 6 12 13 12V16Z" fill="#dcdcd8"/></g>
<rect x="721" y="109" width="1" height="1" fill="#b4b4b4"/><rect x="724" y="109" width="1" height="1" fill="#b4b4b4"/><rect x="721" y="112" width="1" height="1" fill="#b4b4b4"/><rect x="724" y="112" width="1" height="1" fill="#b4b4b4"/><rect x="721" y="115" width="1" height="1" fill="#b4b4b4"/><rect x="724" y="115" width="1" height="1" fill="#b4b4b4"/><rect x="721" y="118" width="1" height="1" fill="#b4b4b4"/><rect x="724" y="118" width="1" height="1" fill="#b4b4b4"/><rect x="721" y="121" width="1" height="1" fill="#b4b4b4"/><rect x="724" y="121" width="1" height="1" fill="#b4b4b4"/><rect x="721" y="124" width="1" height="1" fill="#b4b4b4"/><rect x="724" y="124" width="1" height="1" fill="#b4b4b4"/><g transform="translate(733,105)"><path d="M0.5 7L4 2H22V12H4Z" fill="#f2e23a" stroke="#b89a10"/><text x="4.5" y="10.5" font-family="Liberation Sans" font-weight="bold" font-size="8.5" fill="#222">abc</text></g>
<g transform="translate(767,105)"><circle cx="6.5" cy="7.5" r="6" fill="#c03030"/><path d="M6.5 7.5V1.5A6 6 0 0 1 12.3 6Z" fill="#f0d020"/><path d="M6.5 7.5L12.3 6A6 6 0 0 1 9 13Z" fill="#c03030"/><path d="M6.5 7.5L9 13A6 6 0 0 1 0.5 8Z" fill="#20a040"/><path d="M6.5 7.5L0.5 8A6 6 0 0 1 6.5 1.5Z" fill="#20a040"/><rect x="8" y="17" width="3" height="5.5" fill="#f0d020"/><rect x="11.5" y="10" width="3" height="12.5" fill="#20a040" stroke="#333" stroke-width="0.5"/><rect x="15" y="15" width="3" height="7.5" fill="#c03030" stroke="#333" stroke-width="0.5"/></g>
<rect x="798" y="108" width="1" height="18" fill="#ccc"/><g transform="translate(806,105)"><path d="M0.5 7L4 2H21V12H4Z" fill="#e8f0fa" stroke="#5b8bcf"/><text x="4.5" y="10.5" font-family="Liberation Sans" font-weight="bold" font-size="8.5" fill="#222">ab</text><path d="M17 7V15" stroke="#888" stroke-width="1.2"/><circle cx="18" cy="17" r="4" fill="#a02020"/></g>
<g transform="translate(839,105)"><path d="M0.5 7L4 2H22V12H4Z" fill="#fff" stroke="#e02020" stroke-width="1.2"/><text x="4.5" y="10.5" font-family="Liberation Sans" font-weight="bold" font-size="8.5" fill="#e02020">abc</text></g>
<rect x="871" y="108" width="1" height="18" fill="#ccc"/><g transform="translate(879,105)"><path d="M0.5 7L4 2H20V12H4Z" fill="#e6e4de" stroke="#d0cec8"/><text x="4" y="10.5" font-family="Liberation Sans" font-size="8.5" fill="#c8c6c0">abc</text><circle cx="19" cy="17" r="4" fill="#d4d0ce"/></g>
<g transform="translate(911,105)"><path d="M0.5 7L4 2H20V12H4Z" fill="#e6e4de" stroke="#d0cec8"/><text x="4" y="10.5" font-family="Liberation Sans" font-size="8.5" fill="#c8c6c0">abc</text><ellipse cx="16" cy="18" rx="6" ry="3" fill="none" stroke="#d8d8d8"/><circle cx="16" cy="18" r="1.3" fill="#ccc"/></g>
<g transform="translate(945,105)"><path d="M0.5 7L4 2H20V12H4Z" fill="#e6e4de" stroke="#d0cec8"/><text x="4" y="10.5" font-family="Liberation Sans" font-size="8.5" fill="#c8c6c0">abc</text><rect x="13" y="13" width="10" height="10" rx="1.5" fill="#d0d0cc"/><path d="M15 18H20M18 16L20 18L18 20" stroke="#fff" stroke-width="1.3" fill="none"/></g>
<g transform="translate(978,105)"><path d="M0.5 7L4 2H20V12H4Z" fill="#e6e4de" stroke="#d0cec8"/><text x="4" y="10.5" font-family="Liberation Sans" font-size="8.5" fill="#c8c6c0">abc</text><rect x="13" y="13" width="10" height="10" rx="1.5" fill="#d0d0cc"/><circle cx="18" cy="18" r="2.5" fill="none" stroke="#fff" stroke-width="1.3"/></g>
<g transform="translate(1011,105)"><path d="M0.5 7L4 2H20V12H4Z" fill="#e6e4de" stroke="#d0cec8"/><text x="4" y="10.5" font-family="Liberation Sans" font-size="8.5" fill="#c8c6c0">abc</text><rect x="13" y="13" width="10" height="10" rx="1.5" fill="#d8d6cc"/><path d="M15 21L21 15" stroke="#fff" stroke-width="1.5"/></g>
<rect x="1049" y="109" width="1" height="1" fill="#b4b4b4"/><rect x="1052" y="109" width="1" height="1" fill="#b4b4b4"/><rect x="1049" y="112" width="1" height="1" fill="#b4b4b4"/><rect x="1052" y="112" width="1" height="1" fill="#b4b4b4"/><rect x="1049" y="115" width="1" height="1" fill="#b4b4b4"/><rect x="1052" y="115" width="1" height="1" fill="#b4b4b4"/><rect x="1049" y="118" width="1" height="1" fill="#b4b4b4"/><rect x="1052" y="118" width="1" height="1" fill="#b4b4b4"/><rect x="1049" y="121" width="1" height="1" fill="#b4b4b4"/><rect x="1052" y="121" width="1" height="1" fill="#b4b4b4"/><rect x="1049" y="124" width="1" height="1" fill="#b4b4b4"/><rect x="1052" y="124" width="1" height="1" fill="#b4b4b4"/><rect x="1066" y="109" width="1" height="1" fill="#b4b4b4"/><rect x="1069" y="109" width="1" height="1" fill="#b4b4b4"/><rect x="1066" y="112" width="1" height="1" fill="#b4b4b4"/><rect x="1069" y="112" width="1" height="1" fill="#b4b4b4"/><rect x="1066" y="115" width="1" height="1" fill="#b4b4b4"/><rect x="1069" y="115" width="1" height="1" fill="#b4b4b4"/><rect x="1066" y="118" width="1" height="1" fill="#b4b4b4"/><rect x="1069" y="118" width="1" height="1" fill="#b4b4b4"/><rect x="1066" y="121" width="1" height="1" fill="#b4b4b4"/><rect x="1069" y="121" width="1" height="1" fill="#b4b4b4"/><rect x="1066" y="124" width="1" height="1" fill="#b4b4b4"/><rect x="1069" y="124" width="1" height="1" fill="#b4b4b4"/><g transform="translate(1079,105)"><path d="M10 1C5 1 5 3 5 5V7H11V8H3C1 8 0 10 0 12.5C0 15 1 17 3 17H5V14C5 12 6.5 11 8.5 11H13C15 11 16 10 16 8V5C16 3 14 1 10 1Z" fill="#3a72aa"/><path d="M11 22C16 22 16 20 16 18V16H10V15H18C20 15 21 13 21 10.5C21 8 20 6 18 6H16V9C16 11 14.5 12 12.5 12H8C6 12 5 13 5 15V18C5 20 7 22 11 22Z" fill="#f5c93a"/><path d="M15 17L19 19.5L15 22" fill="none" stroke="#333" stroke-width="1"/></g>
<g transform="translate(1110,105)"><path d="M11 2A10 10 0 1 1 2.5 16L6.5 14A5.5 5.5 0 1 0 11 6.5V10L4 4.5L11 -1Z" fill="#2f7fd8"/><ellipse cx="12" cy="22" rx="6" ry="1.2" fill="#ccc" opacity="0.6"/></g>
<text x="1135" y="122.3" font-family="Liberation Sans" font-size="13" fill="#232627" textLength="96" lengthAdjust="spacingAndGlyphs">Reload a plugin...</text><path d="M1247 118H1255L1251 122Z" fill="#4a4a4a"/><rect x="1267" y="109" width="1" height="1" fill="#b4b4b4"/><rect x="1270" y="109" width="1" height="1" fill="#b4b4b4"/><rect x="1267" y="112" width="1" height="1" fill="#b4b4b4"/><rect x="1270" y="112" width="1" height="1" fill="#b4b4b4"/><rect x="1267" y="115" width="1" height="1" fill="#b4b4b4"/><rect x="1270" y="115" width="1" height="1" fill="#b4b4b4"/><rect x="1267" y="118" width="1" height="1" fill="#b4b4b4"/><rect x="1270" y="118" width="1" height="1" fill="#b4b4b4"/><rect x="1267" y="121" width="1" height="1" fill="#b4b4b4"/><rect x="1270" y="121" width="1" height="1" fill="#b4b4b4"/><rect x="1267" y="124" width="1" height="1" fill="#b4b4b4"/><rect x="1270" y="124" width="1" height="1" fill="#b4b4b4"/><rect x="1280.5" y="106.5" width="19" height="21" fill="#d8dce0" stroke="#c4c8cc"/><rect x="1280.5" y="106.5" width="4" height="21" fill="#b8bcc0"/><text x="1287" y="122" font-family="Liberation Sans" font-size="13" fill="#eef0f2">?</text><rect x="1316" y="109" width="1" height="1" fill="#b4b4b4"/><rect x="1319" y="109" width="1" height="1" fill="#b4b4b4"/><rect x="1316" y="112" width="1" height="1" fill="#b4b4b4"/><rect x="1319" y="112" width="1" height="1" fill="#b4b4b4"/><rect x="1316" y="115" width="1" height="1" fill="#b4b4b4"/><rect x="1319" y="115" width="1" height="1" fill="#b4b4b4"/><rect x="1316" y="118" width="1" height="1" fill="#b4b4b4"/><rect x="1319" y="118" width="1" height="1" fill="#b4b4b4"/><rect x="1316" y="121" width="1" height="1" fill="#b4b4b4"/><rect x="1319" y="121" width="1" height="1" fill="#b4b4b4"/><rect x="1316" y="124" width="1" height="1" fill="#b4b4b4"/><rect x="1319" y="124" width="1" height="1" fill="#b4b4b4"/><rect x="5" y="148" width="1" height="1" fill="#b4b4b4"/><rect x="8" y="148" width="1" height="1" fill="#b4b4b4"/><rect x="5" y="151" width="1" height="1" fill="#b4b4b4"/><rect x="8" y="151" width="1" height="1" fill="#b4b4b4"/><rect x="5" y="154" width="1" height="1" fill="#b4b4b4"/><rect x="8" y="154" width="1" height="1" fill="#b4b4b4"/><rect x="5" y="157" width="1" height="1" fill="#b4b4b4"/><rect x="8" y="157" width="1" height="1" fill="#b4b4b4"/><rect x="5" y="160" width="1" height="1" fill="#b4b4b4"/><rect x="8" y="160" width="1" height="1" fill="#b4b4b4"/><rect x="5" y="163" width="1" height="1" fill="#b4b4b4"/><rect x="8" y="163" width="1" height="1" fill="#b4b4b4"/><g transform="translate(16,144)"><path d="M1 1V23H24Z" fill="#e2dcd6" stroke="#888" stroke-width="1"/><path d="M5 13V20H12Z" fill="#fff" stroke="#888" stroke-width="0.9"/><rect x="16" y="2" width="6" height="18" fill="#ecebe4" stroke="#aaa" stroke-width="0.7"/><path d="M19 5H22M20 8H22M19 11H22M20 14H22M19 17H22" stroke="#aaa" stroke-width="0.6"/></g>
<g transform="translate(51,144)"><path d="M2 2L8 14L14 4H22" fill="none" stroke="#d0d0d0" stroke-width="1"/><rect x="0.5" y="0.5" width="3" height="3" fill="none" stroke="#ccc"/><rect x="6.5" y="12.5" width="3" height="3" fill="none" stroke="#ccc"/><rect x="12.5" y="2.5" width="3" height="3" fill="none" stroke="#ccc"/><rect x="18.5" y="2.5" width="3" height="3" fill="none" stroke="#ccc"/><rect x="12" y="13" width="11" height="10" rx="1.5" fill="#d0d0d0"/><path d="M14 18H20M18 15.5L20.5 18L18 20.5" stroke="#fff" stroke-width="1.6" fill="none"/></g>
<path d="M81 156H89L85 160Z" fill="#d0d0d0"/><g transform="translate(96,144)"><path d="M2 7C1 2 9 1 13 3C18 2 23 4 23 9C23 14 17 13 14 13C9 13 3 14 2 7Z" fill="#d9d9d5" stroke="#c4c4c0" stroke-width="1"/><g transform="translate(12,12)"><rect x="0" y="0" width="10.5" height="10.5" rx="1.5" fill="#cfcfcb"/><g transform="translate(0.25,0.25)"><circle cx="5" cy="5" r="2.3" fill="none" stroke="#fff" stroke-width="1.3"/></g></g></g>
<g transform="translate(129,144)"><path d="M2 7C1 2 9 1 13 3C18 2 23 4 23 9C23 14 17 13 14 13C9 13 3 14 2 7Z" fill="#d9d9d5" stroke="#c4c4c0" stroke-width="1"/><g transform="translate(12,12)"><rect x="0" y="0" width="10.5" height="10.5" rx="1.5" fill="#cfcfcb"/><g transform="translate(0.25,0.25)"><path d="M2 5H8M3.5 3L1.5 5L3.5 7M6.5 3L8.5 5L6.5 7" stroke="#fff" stroke-width="1.2" fill="none"/></g></g></g>
<g transform="translate(162,144)"><circle cx="8" cy="8" r="7" fill="#d6d6d2" stroke="#c4c4c0"/><path d="M10 10L16 7L22 11L21 18L15 21L10 17Z" fill="#e0e0dc" stroke="#c8c8c4"/></g>
<g transform="translate(195,144)"><path d="M2 7C1 2 9 1 13 3C18 2 23 4 23 9C23 14 17 13 14 13C9 13 3 14 2 7Z" fill="#d9d9d5" stroke="#c4c4c0" stroke-width="1"/><ellipse cx="8" cy="5" rx="4" ry="2.2" fill="#eee" stroke="#c4c4c0"/><g transform="translate(12,12)"><rect x="0" y="0" width="10.5" height="10.5" rx="1.5" fill="#cbc8bc"/><g transform="translate(0.25,0.25)"><circle cx="5" cy="5" r="2.5" fill="none" stroke="#fff" stroke-width="1.2"/><path d="M5 1V9M1 5H9" stroke="#fff" stroke-width="0.8"/></g></g></g>
<g transform="translate(228,144)"><path d="M2 7C1 2 9 1 13 3C18 2 23 4 23 9C23 14 17 13 14 13C9 13 3 14 2 7Z" fill="#d9d9d5" stroke="#c4c4c0" stroke-width="1"/><path d="M2 19C2 15 5 13 8 13C9 16 7 21 4 21Z" fill="#d6d6d2" stroke="#c4c4c0"/><g transform="translate(12,12)"><rect x="0" y="0" width="10.5" height="10.5" rx="1.5" fill="#cbc8bc"/><g transform="translate(0.25,0.25)"><circle cx="5" cy="5" r="2.5" fill="none" stroke="#fff" stroke-width="1.2"/><path d="M5 1V9M1 5H9" stroke="#fff" stroke-width="0.8"/></g></g></g>
<g transform="translate(261,144)"><path d="M2 7C1 2 9 1 13 3C18 2 23 4 23 9C23 14 17 13 14 13C9 13 3 14 2 7Z" fill="#d9d9d5" stroke="#c4c4c0" stroke-width="1"/><ellipse cx="7" cy="5" rx="4" ry="2.3" fill="#d0d0cc" stroke="#c4c4c0"/><g transform="translate(12,12)"><rect x="0" y="0" width="10.5" height="10.5" rx="1.5" fill="#cbc8bc"/><g transform="translate(0.25,0.25)"><circle cx="5" cy="5" r="2.5" fill="none" stroke="#fff" stroke-width="1.2"/><path d="M5 1V9M1 5H9" stroke="#fff" stroke-width="0.8"/></g></g></g>
<g transform="translate(294,144)"><path d="M2 7C1 2 9 1 13 3C18 2 23 4 23 9C23 14 17 13 14 13C9 13 3 14 2 7Z" fill="#d9d9d5" stroke="#c4c4c0" stroke-width="1"/><ellipse cx="7" cy="5" rx="4" ry="2.3" fill="#eee" stroke="#c4c4c0"/><g transform="translate(13,13)"><rect x="0" y="0" width="10.5" height="10.5" rx="1.5" fill="#e4dcdc"/><g transform="translate(0.25,0.25)"><path d="M2.5 2.5L7.5 7.5M7.5 2.5L2.5 7.5" stroke="#fff" stroke-width="1.5"/></g></g></g>
<g transform="translate(326,144)"><path d="M2 7C1 2 9 1 13 3C18 2 23 4 23 9C23 14 17 13 14 13C9 13 3 14 2 7Z" fill="#d9d9d5" stroke="#c4c4c0" stroke-width="1"/><path d="M2 19C2 15 5 13 8 13C9 16 7 21 4 21Z" fill="#d6d6d2" stroke="#c4c4c0"/><g transform="translate(13,13)"><rect x="0" y="0" width="10.5" height="10.5" rx="1.5" fill="#e4dcdc"/><g transform="translate(0.25,0.25)"><path d="M2.5 2.5L7.5 7.5M7.5 2.5L2.5 7.5" stroke="#fff" stroke-width="1.5"/></g></g></g>
<g transform="translate(360,144)"><path d="M2 5C2 1 9 1 12 2C16 1 21 2 21 6C21 10 16 10 13 9C12 13 11 21 7 21C4 21 4 12 2 5Z" fill="#d6d6d2" stroke="#c4c4c0"/></g>
<g transform="translate(393,144)"><path d="M3 19C0 16 3 11 8 7C13 2 18 1 21 4C23 8 18 13 14 17C10 21 6 22 3 19Z" fill="#d8d8d0" stroke="#c8c4b4" stroke-width="1.5"/></g>
<g transform="translate(426,144)"><path d="M2 2L8 14L14 4H22" fill="none" stroke="#d0d0d0" stroke-width="1"/><rect x="0.5" y="0.5" width="3" height="3" fill="none" stroke="#ccc"/><rect x="6.5" y="12.5" width="3" height="3" fill="none" stroke="#ccc"/><rect x="12.5" y="2.5" width="3" height="3" fill="none" stroke="#ccc"/><rect x="18.5" y="2.5" width="3" height="3" fill="none" stroke="#ccc"/><g transform="translate(12,12)"><rect x="0" y="0" width="10.5" height="10.5" rx="1.5" fill="#c8c8c8"/><g transform="translate(0.25,0.25)"><circle cx="5" cy="5" r="2.3" fill="none" stroke="#fff" stroke-width="1.3"/></g></g></g>
<g transform="translate(459,144)"><path d="M9 1V22M13 1V22M1 10H22" stroke="#d8d8d8" stroke-width="1"/><circle cx="9" cy="10" r="2" fill="none" stroke="#ccc"/><rect x="11.5" y="8.5" width="3" height="3" fill="none" stroke="#ccc"/><g transform="translate(13,1)"><rect x="0" y="0" width="10.5" height="10.5" rx="1.5" fill="#ddd8c0"/><g transform="translate(0.25,0.25)"><circle cx="5" cy="5" r="2.5" fill="none" stroke="#fff" stroke-width="1.2"/><path d="M5 1V9M1 5H9" stroke="#fff" stroke-width="0.8"/></g></g><g transform="translate(0,14)"><rect x="0" y="0" width="10.5" height="10.5" rx="1.5" fill="#eee4e4"/><g transform="translate(0.25,0.25)"><path d="M2.5 2.5L7.5 7.5M7.5 2.5L2.5 7.5" stroke="#fff" stroke-width="1.5"/></g></g></g>
<g transform="translate(492,144)"><circle cx="6" cy="7" r="5.5" fill="#d6d6d2"/><circle cx="17" cy="7" r="5.5" fill="#d6d6d2"/><path d="M8 2L14 19M15 2L9 19" stroke="#d8d4d4" stroke-width="1"/><circle cx="8" cy="20" r="2.3" fill="none" stroke="#dcc8c8"/><circle cx="15" cy="20" r="2.3" fill="none" stroke="#dcc8c8"/></g>
<g transform="translate(525,144)"><circle cx="6" cy="7" r="5.5" fill="#d6d6d2"/><circle cx="17" cy="7" r="5.5" fill="#d6d6d2"/><path d="M8 2L14 19M15 2L9 19" stroke="#d8d4d4" stroke-width="1"/><circle cx="8" cy="20" r="2.3" fill="none" stroke="#dcc8c8"/><circle cx="15" cy="20" r="2.3" fill="none" stroke="#dcc8c8"/></g>
<g transform="translate(558,144)"><circle cx="6" cy="6" r="5" fill="#d6d6d2"/><circle cx="17" cy="6" r="5" fill="#d6d6d2"/><path d="M8 4H14M8 7H14" stroke="#ccc"/><path d="M5 11C6 15 9 18 12 20" fill="none" stroke="#ccc"/></g>
<g transform="translate(592,144)"><path d="M0 1H20M0 8H20M0 15H20M0 21H20" stroke="#dcdcdc" stroke-width="1"/><path d="M6 4C8 2 12 2 14 4M6 11C8 9 12 9 14 11M6 18C8 16 12 16 14 18" fill="none" stroke="#ccc" stroke-width="0.8"/><path d="M10 1V21" stroke="#ddd" stroke-width="0.7"/></g>
<g transform="translate(625,144)"><path d="M11 1V10L19 5Z" fill="#d4d4d2"/><path d="M6 21L11 12L16 21Z" fill="none" stroke="#ddd"/><path d="M8 3C3 6 2 12 6 17" fill="none" stroke="#d0d0d0" stroke-width="1"/></g>
<path d="M654 155H662L658 159Z" fill="#d0d0d0"/><rect x="673" y="148" width="1" height="1" fill="#b4b4b4"/><rect x="676" y="148" width="1" height="1" fill="#b4b4b4"/><rect x="673" y="151" width="1" height="1" fill="#b4b4b4"/><rect x="676" y="151" width="1" height="1" fill="#b4b4b4"/><rect x="673" y="154" width="1" height="1" fill="#b4b4b4"/><rect x="676" y="154" width="1" height="1" fill="#b4b4b4"/><rect x="673" y="157" width="1" height="1" fill="#b4b4b4"/><rect x="676" y="157" width="1" height="1" fill="#b4b4b4"/><rect x="673" y="160" width="1" height="1" fill="#b4b4b4"/><rect x="676" y="160" width="1" height="1" fill="#b4b4b4"/><rect x="673" y="163" width="1" height="1" fill="#b4b4b4"/><rect x="676" y="163" width="1" height="1" fill="#b4b4b4"/><g transform="translate(686,144)"><path d="M4 12L10 18C12.5 20.5 16.5 20.5 18.5 18.5C20.5 16.5 20.5 12.5 18 10L12 4" fill="none" stroke="#cc1010" stroke-width="5.5"/><path d="M2.2 13.8L5.8 10.2M10.2 5.8L13.8 2.2" stroke="#f4f4f4" stroke-width="3"/></g>
<g transform="translate(720,144)"><path d="M2 2L6 12L8 20M6 12L13 2M13 2H19M8 12L15 8H19" fill="none" stroke="#d8d8d8" stroke-width="1"/><circle cx="2" cy="2" r="1.4" fill="none" stroke="#ddd"/><circle cx="6" cy="12" r="1.4" fill="none" stroke="#ddd"/><circle cx="19" cy="2" r="1.4" fill="none" stroke="#ddd"/><circle cx="19" cy="8" r="1.4" fill="none" stroke="#ddd"/></g>
<path d="M735 165H743L739 169Z" fill="#d4d4d4"/><rect x="746.5" y="141.5" width="31" height="30" rx="3" fill="#dadada" stroke="#cacaca"/><rect x="754" y="149" width="3" height="3" fill="none" stroke="#c6c6c6"/><rect x="766" y="151" width="3" height="3" fill="none" stroke="#c6c6c6"/><rect x="757" y="161" width="3" height="3" fill="none" stroke="#c6c6c6"/><path d="M766 166H771L768.5 168.5Z" fill="#ccc"/><rect x="779.5" y="144.5" width="88" height="23" rx="3" fill="#efefef" stroke="#c0c0c0"/><rect x="853" y="145" width="1" height="22" fill="#c8c8c8"/><path d="M856 153L860 149L864 153ZM856 160L860 164L864 160Z" fill="#d4d4d4"/><text x="784" y="161.5" font-family="Liberation Sans" font-size="13" fill="#b0b0b0">12</text><rect x="869.5" y="144.5" width="93" height="24" rx="3" fill="#f6f6f6" stroke="#c8c8c8"/><text x="874" y="161.5" font-family="Liberation Sans" font-size="13" fill="#b0b0b0">px</text><path d="M947 155H955L951 159Z" fill="#d0d0d0"/><g transform="translate(970,144)"><path d="M10 12V22M10 12L2 2M10 12L21 8" stroke="#5cb85c" stroke-width="1.5"/><rect x="8" y="10" width="4" height="4" fill="#aaa" stroke="#777" stroke-width="0.6"/></g>
<g transform="translate(1001,144)"><path d="M8 2C14 0 21 2 21 7C21 11 18 12 16 14L14 11C15 8 12 6 8 7Z" fill="#bbb" stroke="#555" stroke-width="0.8"/><path d="M6 12C10 12 14 14 14 18C14 22 10 22 7 20C4 18 4 14 6 12Z" fill="#8fbf7f" stroke="#555" stroke-width="0.8"/><circle cx="6" cy="7" r="4.5" fill="#dd1111"/><path d="M11 6L13 9L20 20L18 21L12 11Z" fill="#e8d07a" stroke="#555" stroke-width="0.7"/></g>
<g transform="translate(1035,144)"><path d="M1 1L22 22M22 1L1 22" stroke="#dcdcdc" stroke-width="1.6"/></g>
<g transform="translate(1067,144)"><path d="M1 22L22 1" stroke="#dcdcdc" stroke-width="1.6"/><path d="M3 3L10 10L17 8L18 21L12 13L3 14Z" fill="#dad8cc"/></g>
<path d="M1097 155H1105L1101 159Z" fill="#d0d0d0"/><g transform="translate(1113,144)"><circle cx="4" cy="6" r="2.5" fill="none" stroke="#d8d8d8"/><circle cx="8" cy="18" r="2.5" fill="none" stroke="#d8d8d8"/><path d="M6 8L20 12M8 16L3 21M6 8L8 16" stroke="#d8d8d8"/><path d="M12 4L16 1L22 11L20 13Z" fill="#e4e4dc"/></g>
<rect x="5" y="187" width="1" height="1" fill="#b4b4b4"/><rect x="8" y="187" width="1" height="1" fill="#b4b4b4"/><rect x="5" y="190" width="1" height="1" fill="#b4b4b4"/><rect x="8" y="190" width="1" height="1" fill="#b4b4b4"/><rect x="5" y="193" width="1" height="1" fill="#b4b4b4"/><rect x="8" y="193" width="1" height="1" fill="#b4b4b4"/><rect x="5" y="196" width="1" height="1" fill="#b4b4b4"/><rect x="8" y="196" width="1" height="1" fill="#b4b4b4"/><rect x="5" y="199" width="1" height="1" fill="#b4b4b4"/><rect x="8" y="199" width="1" height="1" fill="#b4b4b4"/><rect x="5" y="202" width="1" height="1" fill="#b4b4b4"/><rect x="8" y="202" width="1" height="1" fill="#b4b4b4"/><g transform="translate(17,183)"><rect x="0.5" y="2.5" width="17" height="18" fill="#f0f0ee" stroke="#d0d0d0"/><path d="M0.5 2.5L17 20M17 2.5L0.5 20M0.5 14H17" stroke="#d4d4d4"/><path d="M8 21L19 4L22 6L11 23Z" fill="#e6e6e6" stroke="#ccc" stroke-width="0.6"/></g>
<path d="M47 195H55L51 199Z" fill="#d0d0d0"/><g transform="translate(61,183)"><rect x="0.5" y="1.5" width="22" height="20" fill="#eceae4" stroke="#d0d0d0"/><path d="M0.5 12H22M11 1.5V21M0.5 1.5L11 12M11 1.5L0.5 12M11 12L22 1.5" stroke="#d4d4d0"/><text x="11" y="24" font-family="Liberation Serif" font-size="14" fill="#c8c8c8">ε</text></g>
<path d="M92 195H100L96 199Z" fill="#d0d0d0"/><g transform="translate(108,183)"><rect x="1" y="2" width="8" height="8" fill="none" stroke="#ccc"/><path d="M1 2L9 10M9 2L1 10" stroke="#ccc"/><rect x="1" y="13" width="8" height="8" fill="none" stroke="#ccc"/><path d="M1 13L9 21M9 13L1 21" stroke="#ccc"/><path d="M14 4L18 1L22 5L18 8Z" fill="none" stroke="#ccc"/><text x="12" y="22" font-family="Liberation Serif" font-size="14" fill="#c8c8c8">ε</text></g>
<g transform="translate(140,183)"><path d="M1 21L3 2L12 14L21 1L23 21Z" fill="none" stroke="#d0d0d0" stroke-width="1"/><circle cx="3" cy="2" r="1.3" fill="#ddd"/><circle cx="21" cy="1" r="1.3" fill="#ddd"/><circle cx="12" cy="14" r="1.3" fill="#ddd"/></g>
<path d="M171 195H179L175 199Z" fill="#d0d0d0"/><rect x="189" y="187" width="1" height="1" fill="#b4b4b4"/><rect x="192" y="187" width="1" height="1" fill="#b4b4b4"/><rect x="189" y="190" width="1" height="1" fill="#b4b4b4"/><rect x="192" y="190" width="1" height="1" fill="#b4b4b4"/><rect x="189" y="193" width="1" height="1" fill="#b4b4b4"/><rect x="192" y="193" width="1" height="1" fill="#b4b4b4"/><rect x="189" y="196" width="1" height="1" fill="#b4b4b4"/><rect x="192" y="196" width="1" height="1" fill="#b4b4b4"/><rect x="189" y="199" width="1" height="1" fill="#b4b4b4"/><rect x="192" y="199" width="1" height="1" fill="#b4b4b4"/><rect x="189" y="202" width="1" height="1" fill="#b4b4b4"/><rect x="192" y="202" width="1" height="1" fill="#b4b4b4"/><rect x="200" y="182.5" width="25" height="25" fill="#59a042"/><rect x="200" y="182.5" width="25" height="12" fill="#6db555" opacity="0.6"/><circle cx="214.5" cy="193" r="6.5" fill="none" stroke="#fff" stroke-width="2"/><path d="M209.5 198L204 203.5" stroke="#fff" stroke-width="2.5"/><rect x="234" y="183" width="23" height="24" fill="#f6d84a"/><path d="M234 195C240 190 244 198 250 195L257 200V207H234Z" fill="#4d8bd8"/><path d="M236 186L241 184L240 190Z" fill="#3a9a3a"/><path d="M238 202L254 186" stroke="#b05010" stroke-width="3"/><path d="M252 188L256 184" stroke="#222" stroke-width="3"/><g transform="translate(8,240)"><path d="M1 12L8 8L12 14L5 18Z" fill="#e04a20"/><path d="M2 10L10 6L13 11L5 15Z" fill="#f0c830"/><path d="M3 8L10 4L12 8L5 12Z" fill="#5b8bcf"/><path d="M10 7L15 1" stroke="#c89020" stroke-width="2.5"/></g>
<g transform="translate(34,240)"><rect x="0.5" y="6" width="10" height="11" fill="none" stroke="#888"/><rect x="3.5" y="2" width="10" height="12" fill="#f4f4f4" stroke="#888"/><path d="M6 0V10M10 0V10" stroke="#888" stroke-width="0.8"/><circle cx="12" cy="15" r="3.5" fill="#5cb85c"/><path d="M12 13V17M10 15H14" stroke="#fff" stroke-width="1.2"/></g>
<g transform="translate(58,240)"><path d="M1 8C4 3 13 3 16 8C13 13 4 13 1 8Z" fill="#fff" stroke="#888" stroke-width="1.2"/><circle cx="8.5" cy="8" r="3" fill="#4d7bc0"/><path d="M12 16H20L16 20Z" fill="#555"/></g>
<g transform="translate(84,240)"><path d="M1 1H15V4L10 9V16L6 14V9L1 4Z" fill="#5b8bcf"/><path d="M1 1H15V3H1Z" fill="#f0c830"/><path d="M10 16H18L14 20Z" fill="#555"/></g>
<g transform="translate(109,240)"><text x="0" y="12" font-family="Liberation Serif" font-size="15" fill="#8a4a9a">ε</text><path d="M8 11H14L13 18H9Z" fill="#bbb"/></g>
<path d="M130 250H138L134 254Z" fill="#444"/><g transform="translate(146,240)"><rect x="0.5" y="3" width="6" height="13" fill="none" stroke="#999" stroke-dasharray="1.5 1"/><rect x="3" y="6" width="3" height="3" fill="#f0a020"/><rect x="3" y="12" width="3" height="3" fill="#f0a020"/><path d="M11 1V12M7 9L11 15L15 9" fill="#4d7bc0" stroke="#4d7bc0" stroke-width="2.5"/></g>
<g transform="translate(171,240)"><rect x="0.5" y="3" width="6" height="13" fill="none" stroke="#999" stroke-dasharray="1.5 1"/><rect x="3" y="6" width="3" height="3" fill="#f0a020"/><rect x="3" y="12" width="3" height="3" fill="#f0a020"/><path d="M11 16V5M7 7L11 1L15 7" fill="#4d7bc0" stroke="#4d7bc0" stroke-width="2.5"/></g>
<g transform="translate(196,240)"><rect x="0.5" y="1" width="11" height="13" fill="#fff" stroke="#666" stroke-width="1.1"/><rect x="7" y="11" width="8" height="5" rx="1" fill="#e03030"/><path d="M8.5 13.5H13.5" stroke="#fff" stroke-width="1.2"/></g>
<g transform="translate(1383,242)"><circle cx="5" cy="5" r="4.5" fill="#dd2020"/><circle cx="12" cy="9" r="3.5" fill="#999"/><circle cx="6" cy="12" r="2.5" fill="#7a9ad8"/><path d="M12 13H18L15 16Z" fill="#444"/></g>
<g transform="translate(1409,242)"><path d="M7 0C3 0 3 2 3 3V5H7V6H1C0 6 0 7.5 0 9.5C0 11.5 1 12 2 12H3V10C3 9 4 8 5 8H9C10 8 11 7 11 6V3C11 1 9 0 7 0Z" fill="#3a72aa"/><path d="M8 15C12 15 12 13 12 12V10H8V9H13C14 9 15 8 15 6C15 4 14 3 13 3H12V5C12 6 11 7 10 7H6C5 7 4 8 4 9V12C4 14 6 15 8 15Z" fill="#f5c93a"/><path d="M9 12H15L12 15Z" fill="#444"/></g>
<g transform="translate(1433,242)"><circle cx="8" cy="8" r="7.2" fill="#f8f8f8" stroke="#888" stroke-width="1.2"/><path d="M8 3V8.5L11 11" fill="none" stroke="#888" stroke-width="1.2"/></g>
<g transform="translate(1459,242)"><path d="M0.5 0.5H9L12.5 4V15.5H0.5Z" fill="#f4f4f4" stroke="#999"/><path d="M3 6H10M3 8.5H10M3 11H10" stroke="#aaa"/></g>
<rect x="1482" y="244" width="1" height="14" fill="#d0d0d0"/><g transform="translate(1490,242)"><path d="M1 2H12L15 6V14H4L1 10Z" fill="#f0d838" stroke="#c8a818"/><path d="M8 13L14 4L16 5L10 14Z" fill="#c8a818"/></g>
<rect x="1514" y="244" width="1" height="14" fill="#d0d0d0"/><g transform="translate(1521,242)"><path d="M2 4C2 1 5 0 7 1L5 3L6 5L8 5L10 3C11 5 10 8 8 8L16 15L14 17L6 10C3 10 2 7 2 4Z" fill="#aaa" stroke="#555" stroke-width="0.7"/><path d="M9 9L15 15" stroke="#e8c13a" stroke-width="2.5"/></g>
</svg><div class="t" style="left:4.2px;top:218.3px;font-size:13px;line-height:13px;color:#232627;transform:scaleX(0.918);transform-origin:0 0;">Layers</div>
<svg class="a" style="left:329px;top:219px" width="26" height="12"><rect x="0.5" y="0.5" width="10" height="11" rx="2.5" fill="none" stroke="#6a6a6a"/><rect x="2.5" y="4.5" width="4" height="4" rx="1" fill="none" stroke="#6a6a6a"/><path d="M4.5 4.5V2.5H8.5V6.5H6.5" fill="none" stroke="#6a6a6a"/><rect x="14.5" y="0.5" width="10" height="11" rx="2.5" fill="none" stroke="#6a6a6a"/><path d="M16.8 3L22.2 9M22.2 3L16.8 9" stroke="#555" stroke-width="1.8"/></svg><div class="a" style="left:0;top:265px;width:356px;height:843px;background:#fff;border:1px solid #bcbcbc"></div><div class="a" style="left:1px;top:266px;width:353px;height:19px;background:#308cc6"></div><div class="a" style="left:24px;top:268px;width:14px;height:14px;background:#fff;border:1px solid #b8b0a8;border-radius:1px"></div><svg class="a" style="left:24px;top:268px" width="14" height="14"><path d="M3 7.2L6 11.2L11 3" fill="none" stroke="#000" stroke-width="2" stroke-linejoin="miter"/></svg><div class="a" style="left:24px;top:287px;width:14px;height:14px;background:#fff;border:1px solid #b8b0a8;border-radius:1px"></div><div class="a" style="left:24px;top:306px;width:14px;height:14px;background:#fff;border:1px solid #b8b0a8;border-radius:1px"></div><svg class="a" style="left:24px;top:306px" width="14" height="14"><path d="M3 7.2L6 11.2L11 3" fill="none" stroke="#000" stroke-width="2" stroke-linejoin="miter"/></svg><div class="a" style="left:24px;top:325px;width:14px;height:14px;background:#fff;border:1px solid #b8b0a8;border-radius:1px"></div><svg class="a" style="left:24px;top:325px" width="14" height="14"><path d="M3 7.2L6 11.2L11 3" fill="none" stroke="#000" stroke-width="2" stroke-linejoin="miter"/></svg><div class="a" style="left:24px;top:344px;width:14px;height:14px;background:#fff;border:1px solid #b8b0a8;border-radius:1px"></div><svg class="a" style="left:24px;top:344px" width="14" height="14"><path d="M3 7.2L6 11.2L11 3" fill="none" stroke="#000" stroke-width="2" stroke-linejoin="miter"/></svg><div class="a" style="left:44px;top:274px;width:14px;height:3px;background:#e5508a"></div><div class="a" style="left:46px;top:288px;width:11px;height:11px;border-radius:6px;background:#f2a7b0;border:1px solid #555"></div><div class="a" style="left:44px;top:312px;width:14px;height:2px;background:#a9bcc4"></div><div class="a" style="left:44px;top:324px;width:16px;height:16px;background:#6f9b6c;border:1px solid #333"></div><svg class="a" style="left:45px;top:344px" width="14" height="14"><rect x="1" y="1" width="4" height="4" fill="#1b2a44"/><rect x="5" y="1" width="4" height="4" fill="#9fb8d8"/><rect x="9" y="1" width="4" height="4" fill="#1b2a44"/><rect x="1" y="5" width="4" height="4" fill="#9fb8d8"/><rect x="5" y="5" width="4" height="4" fill="#1b2a44"/><rect x="9" y="5" width="4" height="4" fill="#9fb8d8"/><rect x="1" y="9" width="4" height="4" fill="#1b2a44"/><rect x="5" y="9" width="4" height="4" fill="#9fb8d8"/><rect x="9" y="9" width="4" height="4" fill="#c9d8ec"/></svg><svg class="a" style="left:6px;top:347px" width="10" height="8"><path d="M1 2H9L5 6Z" fill="#555"/></svg><div class="t" style="left:64.0px;top:269.3px;font-size:13px;line-height:13px;color:#ffffff;font-weight:bold;transform:scaleX(0.956);transform-origin:0 0;">Medial axis [401]</div>
<div class="a" style="left:64px;top:282px;width:99px;height:1px;background:#fff"></div><div class="t" style="left:66.0px;top:288.0px;font-size:13px;line-height:13px;color:#7f7f7f;font-weight:bold;font-style:italic;transform:scaleX(0.892);transform-origin:0 0;">points</div>
<div class="t" style="left:64.0px;top:306.9px;font-size:13px;line-height:13px;color:#000;font-weight:bold;transform:scaleX(0.982);transform-origin:0 0;">ligne</div>
<div class="t" style="left:66.0px;top:325.5px;font-size:13px;line-height:13px;color:#000;font-weight:bold;transform:scaleX(0.952);transform-origin:0 0;">buildings</div>
<div class="t" style="left:66.0px;top:344.5px;font-size:13px;line-height:13px;color:#000;font-weight:bold;transform:scaleX(0.978);transform-origin:0 0;">OpenStreetMap</div>
<div class="a" style="left:332px;top:267px;width:19px;height:17px;background:#f0f0f0"></div><svg class="a" style="left:332px;top:267px" width="19" height="17"><rect x="3.5" y="5.5" width="12" height="6" rx="1.5" fill="none" stroke="#777"/><path d="M5 4V5.5M7.5 4V5.5M10 4V5.5M12.5 4V5.5M5 11.5V13M7.5 11.5V13M10 11.5V13M12.5 11.5V13" stroke="#777"/></svg><div class="a" style="left:1px;top:1109px;width:71px;height:24px;background:#dedede;border:1px solid #c2c2c2;border-radius:3px 3px 0 0"></div><div class="a" style="left:71px;top:1108px;width:61px;height:27px;background:#f6f6f6;border:1px solid #c2c2c2;border-top:none;border-radius:0 0 3px 3px"></div><div class="t" style="left:12.5px;top:1114.8px;font-size:13px;line-height:13px;color:#232627;transform:scaleX(0.961);transform-origin:0 0;">Browser</div>
<div class="t" style="left:83.3px;top:1116.0px;font-size:13px;line-height:13px;color:#232627;transform:scaleX(0.915);transform-origin:0 0;">Layers</div>
<div class="a" style="left:4px;top:1140px;width:221px;height:25px;background:#fff;border:1px solid #b4b4b4;border-radius:3px"></div><svg class="a" style="left:12px;top:1145px" width="16" height="16"><circle cx="6.5" cy="6.5" r="4.5" fill="none" stroke="#777" stroke-width="1.4"/><path d="M10 10L13.5 13.5" stroke="#777" stroke-width="1.6"/></svg><div class="t" style="left:33.3px;top:1146.0px;font-size:13px;line-height:13px;color:#8a8a8a;transform:scaleX(0.945);transform-origin:0 0;">Type to locate (Ctrl+K)</div>
<div class="a" style="left:362px;top:215px;width:1007px;height:922px;border:1px solid #b0b0b0;background:#e0dfdf;overflow:hidden"><svg width="1006" height="921" viewBox="363 216 1006 921" style="position:absolute;left:0;top:0"><defs><pattern id="dots" x="0" y="0" width="14" height="23.2" patternUnits="userSpaceOnUse"><rect x="3" y="3" width="1.8" height="1.8" fill="#86bb74"/><rect x="10" y="14.6" width="1.8" height="1.8" fill="#86bb74"/></pattern></defs><rect x="362" y="215" width="1010" height="925" fill="#e0dfdf"/><polygon points="362.0,263.6 466.0,231.5 521.0,447.6 397.5,480.5 362.0,491.0" fill="#eeeeee" stroke="none" stroke-width="0" />
<polygon points="362.0,215.0 390.0,215.0 362.0,223.0" fill="#eeeeee" stroke="none" stroke-width="0" />
<polyline points="466.0,231.5 521.0,447.6" fill="none" stroke="#b0a7a3" stroke-width="1.6" stroke-linejoin="round" />
<polyline points="521.0,447.6 397.5,480.5 362.0,491.0" fill="none" stroke="#c9b9b4" stroke-width="1.2" stroke-linejoin="round" />
<polyline points="362.0,377.0 461.0,350.0" fill="none" stroke="#c8c8c8" stroke-width="10" stroke-linejoin="round" stroke-linecap="round"/>
<polyline points="362.0,377.0 461.0,350.0" fill="none" stroke="#ffffff" stroke-width="8" stroke-linejoin="round" stroke-linecap="round"/>
<polyline points="519.0,449.0 399.0,479.0" fill="none" stroke="#acd49a" stroke-width="8" stroke-linejoin="round" />
<polygon points="659.0,215.0 922.5,215.0 926.0,224.0 935.0,234.0 950.0,243.0 970.0,252.0 995.0,262.0 1025.0,273.0 1052.0,281.6 1060.5,283.0 866.0,311.0 738.0,328.0 738.0,325.4" fill="#cdebb0" stroke="none" stroke-width="0" />
<polyline points="719.0,213.0 775.0,324.0" fill="none" stroke="#b2d69e" stroke-width="7.5" stroke-linejoin="round" />
<polygon points="738.0,328.0 866.0,311.0 1324.7,245.2 1327.4,443.7 1242.0,453.0 1072.4,479.0 985.6,500.0 916.0,522.0 923.8,649.5 866.0,652.0 827.3,653.4 874.0,447.8 910.7,454.2 925.0,439.8 933.0,418.7 913.3,397.7 866.0,387.0 780.0,367.5 736.6,358.3" fill="#cdebb0" stroke="none" stroke-width="0" />
<polygon points="738.0,328.0 866.0,311.0 1324.7,245.2 1327.4,443.7 1242.0,453.0 1072.4,479.0 985.6,500.0 916.0,522.0 923.8,649.5 866.0,652.0 827.3,653.4 874.0,447.8 910.7,454.2 925.0,439.8 933.0,418.7 913.3,397.7 866.0,387.0 780.0,367.5 736.6,358.3" fill="url(#dots)" stroke="none" stroke-width="0" />
<polyline points="736.6,358.3 738.0,328.0 866.0,311.0 1324.7,245.2 1327.4,443.7 1242.0,453.0 1072.4,479.0 985.6,500.0 916.0,522.0 923.8,649.5 866.0,652.0" fill="none" stroke="#a8b89e" stroke-width="2.2" stroke-linejoin="round" />
<polyline points="973.8,296.0 985.6,500.0" fill="none" stroke="#a8b89e" stroke-width="2.2" stroke-linejoin="round" />
<polyline points="1060.5,283.3 1072.4,479.0" fill="none" stroke="#a8b89e" stroke-width="2.2" stroke-linejoin="round" />
<polyline points="1146.0,271.5 1159.0,465.0" fill="none" stroke="#a8b89e" stroke-width="2.2" stroke-linejoin="round" />
<polyline points="1236.7,258.4 1242.0,453.0" fill="none" stroke="#a8b89e" stroke-width="2.2" stroke-linejoin="round" />
<polygon points="697.2,954.6 772.0,952.6 839.0,951.0 866.0,950.0 876.5,948.6 876.5,906.5 910.7,906.5 912.0,931.5 955.4,930.2 955.4,898.7 968.5,898.7 968.5,872.6 995.2,872.2 1009.0,872.0 1004.5,965.7 1016.0,1137.0 714.0,1137.0" fill="#cdebb0" stroke="none" stroke-width="0" />
<polygon points="697.2,954.6 772.0,952.6 839.0,951.0 866.0,950.0 876.5,948.6 876.5,906.5 910.7,906.5 912.0,931.5 955.4,930.2 955.4,898.7 968.5,898.7 968.5,872.6 995.2,872.2 1009.0,872.0 1004.5,965.7 1016.0,1137.0 714.0,1137.0" fill="url(#dots)" stroke="none" stroke-width="0" />
<polyline points="697.2,954.6 714.0,1137.0" fill="none" stroke="#a8b89e" stroke-width="2.2" stroke-linejoin="round" />
<polyline points="1004.5,965.7 1016.0,1137.0" fill="none" stroke="#a8b89e" stroke-width="2.2" stroke-linejoin="round" />
<polyline points="772.0,952.6 784.0,1137.0" fill="none" stroke="#a8b89e" stroke-width="2.2" stroke-linejoin="round" />
<polyline points="839.0,951.0 852.3,1137.0" fill="none" stroke="#a8b89e" stroke-width="2.2" stroke-linejoin="round" />
<polyline points="912.0,931.5 918.6,1137.0" fill="none" stroke="#a8b89e" stroke-width="2.2" stroke-linejoin="round" />
<polyline points="517.0,492.3 572.3,474.0 625.0,464.7 670.0,461.0 717.0,459.5" fill="none" stroke="#ababab" stroke-width="2" stroke-linejoin="round" />
<polyline points="738.0,328.0 736.6,358.3 706.4,522.0 672.2,643.0 642.0,653.0" fill="none" stroke="#ababab" stroke-width="1.8" stroke-linejoin="round" />
<polyline points="1056.6,646.9 1345.8,689.0" fill="none" stroke="#ababab" stroke-width="2" stroke-linejoin="round" />
<polyline points="1368.0,425.3 1348.4,425.3 1348.4,455.5 1250.0,468.0 1217.0,472.0" fill="none" stroke="#ababab" stroke-width="1.8" stroke-linejoin="round" />
<polyline points="657.7,778.0 660.0,760.0 552.0,762.5 555.2,783.6" fill="none" stroke="#ababab" stroke-width="2" stroke-linejoin="round" />
<polyline points="692.0,778.0 692.0,754.6 866.0,748.0 966.0,749.4 964.6,771.7" fill="none" stroke="#ababab" stroke-width="2" stroke-linejoin="round" />
<polyline points="391.0,778.0 492.0,770.4" fill="none" stroke="#ababab" stroke-width="2" stroke-linejoin="round" />
<polyline points="1009.0,809.0 1008.3,745.9 1078.0,755.6" fill="none" stroke="#ababab" stroke-width="2" stroke-linejoin="round" />
<polyline points="1107.2,762.8 1123.5,766.0 1121.0,792.0 1115.7,829.0 1111.8,850.7 1104.0,934.0 1101.3,1034.0 1114.4,1137.0" fill="none" stroke="#ababab" stroke-width="2" stroke-linejoin="round" />
<polyline points="1171.0,798.0 1177.5,775.7 1247.0,791.5" fill="none" stroke="#ababab" stroke-width="2" stroke-linejoin="round" />
<polyline points="1276.0,802.0 1313.0,815.0 1310.0,829.0" fill="none" stroke="#ababab" stroke-width="2" stroke-linejoin="round" />
<polyline points="1368.0,852.0 1352.0,843.0 1340.0,877.6 1334.6,929.0 1331.8,1030.0 1343.0,1067.0 1350.0,1090.0" fill="none" stroke="#ababab" stroke-width="2" stroke-linejoin="round" />
<polyline points="559.0,894.7 614.0,1137.0" fill="none" stroke="#ababab" stroke-width="1.3" stroke-linejoin="round" />
<polyline points="393.5,1021.0 360.0,1130.0" fill="none" stroke="#acd49a" stroke-width="5" stroke-linejoin="round" />
<polyline points="517.0,1018.3 477.7,1137.0" fill="none" stroke="#acd49a" stroke-width="5" stroke-linejoin="round" />
<polyline points="1205.0,1051.0 1223.5,1137.0" fill="none" stroke="#acd49a" stroke-width="5" stroke-linejoin="round" />
<polyline points="1344.0,1124.0 1352.0,1137.0" fill="none" stroke="#acd49a" stroke-width="5" stroke-linejoin="round" />
<polyline points="1372.0,828.0 1366.0,840.0 1357.6,874.8 1346.0,929.0 1339.0,987.0 1346.0,1044.0 1364.0,1140.0" fill="none" stroke="#aad3df" stroke-width="4.5" stroke-linejoin="round" />
<polyline points="360.0,720.0 601.6,707.0 866.0,697.0 1018.5,692.0 1100.0,697.0 1155.0,705.0 1250.0,727.0 1326.0,749.5 1400.0,793.0" fill="none" stroke="#c4c4c4" stroke-width="41" stroke-linejoin="round" />
<polyline points="360.0,720.0 601.6,707.0 866.0,697.0 1018.5,692.0 1100.0,697.0 1155.0,705.0 1250.0,727.0 1326.0,749.5 1400.0,793.0" fill="none" stroke="#ffffff" stroke-width="38" stroke-linejoin="round" />
<polyline points="359.7,714.0 601.3,701.0 865.8,691.0 1018.6,686.0 1100.6,691.0 1156.1,699.1 1251.5,721.2 1328.4,744.0 1403.0,787.8" fill="none" stroke="#d8ecd6" stroke-width="8" stroke-linejoin="round" />
<polyline points="360.0,720.5 601.6,707.5 866.0,697.5 1018.5,692.5 1099.9,697.5 1154.9,705.5 1249.9,727.5 1325.8,750.0 1399.7,793.4" fill="none" stroke="#b7dbb2" stroke-width="5" stroke-linejoin="round" />
<polyline points="558.0,1050.0 510.0,1142.0" fill="none" stroke="#c8c8c8" stroke-width="16" stroke-linejoin="round" />
<polyline points="521.5,729.0 531.5,829.0 547.0,960.0 563.5,1058.0 584.0,1140.0" fill="none" stroke="#cacaca" stroke-width="40" stroke-linejoin="round" />
<polyline points="558.0,1050.0 510.0,1142.0" fill="none" stroke="#ffffff" stroke-width="12" stroke-linejoin="round" />
<polyline points="521.5,729.0 531.5,829.0 547.0,960.0 563.5,1058.0 584.0,1140.0" fill="none" stroke="#ffffff" stroke-width="36" stroke-linejoin="round" />
<polyline points="360.0,720.0 601.6,707.0 866.0,697.0 1018.5,692.0 1100.0,697.0 1155.0,705.0 1250.0,727.0 1326.0,749.5 1400.0,793.0" fill="none" stroke="#ffffff" stroke-width="36" stroke-linejoin="round" />
<polyline points="359.7,714.0 601.3,701.0 865.8,691.0 1018.6,686.0 1100.6,691.0 1156.1,699.1 1251.5,721.2 1328.4,744.0 1403.0,787.8" fill="none" stroke="#d8ecd6" stroke-width="8" stroke-linejoin="round" />
<polyline points="360.0,720.5 601.6,707.5 866.0,697.5 1018.5,692.5 1099.9,697.5 1154.9,705.5 1249.9,727.5 1325.8,750.0 1399.7,793.4" fill="none" stroke="#b7dbb2" stroke-width="5" stroke-linejoin="round" />
<polyline points="1291.0,581.0 1372.0,586.4" fill="none" stroke="#c8c8c8" stroke-width="11" stroke-linejoin="round" stroke-linecap="round"/>
<polyline points="1291.0,581.0 1372.0,586.4" fill="none" stroke="#ffffff" stroke-width="9" stroke-linejoin="round" stroke-linecap="round"/>
<polyline points="1357.0,390.0 1380.0,390.0" fill="none" stroke="#c8c8c8" stroke-width="24" stroke-linejoin="round" stroke-linecap="round"/>
<polyline points="1357.0,390.0 1380.0,390.0" fill="none" stroke="#ffffff" stroke-width="22" stroke-linejoin="round" stroke-linecap="round"/>
<polyline points="755.0,367.5 722.0,522.0 686.7,683.7" fill="none" stroke="#f88d78" stroke-width="3.3" stroke-linejoin="round" stroke-dasharray="7.5 3.5"/>
<text x="0" y="0" font-family="Liberation Sans" font-size="20" fill="#686868" paint-order="stroke" stroke="#ffffff" stroke-width="3" stroke-linejoin="round" transform="translate(729,626) rotate(-78.4)" textLength="178" lengthAdjust="spacingAndGlyphs">Alpha Cottages</text>
<text x="0" y="0" font-family="Liberation Sans" font-size="26" fill="#2f2f2f" paint-order="stroke" stroke="#ffffff" stroke-width="3" stroke-linejoin="round" transform="translate(602,717.5) rotate(-2.6)" textLength="186" lengthAdjust="spacingAndGlyphs">Kingston Road</text>
<text x="0" y="0" font-family="Liberation Sans" font-style="italic" font-size="27" fill="#3a9a3f" paint-order="stroke" stroke="#d6efc4" stroke-width="2" transform="translate(1007,455.5)" textLength="186" lengthAdjust="spacingAndGlyphs">Alpha Cottages</text>
<text x="799" y="1115.8" font-family="Liberation Sans" font-style="italic" font-size="27" fill="#3a9a3f" paint-order="stroke" stroke="#d6efc4" stroke-width="2" textLength="129" lengthAdjust="spacingAndGlyphs">The Conies</text>
<text x="549" y="939.5" font-family="Liberation Sans" font-size="21" fill="#6a6a6a" paint-order="stroke" stroke="#ffffff" stroke-width="3" stroke-linejoin="round" textLength="134" lengthAdjust="spacingAndGlyphs">Brook Lodge</text>
<text x="998" y="873" font-family="Liberation Sans" font-size="18" fill="#6a6a6a" paint-order="stroke" stroke="#ffffff" stroke-width="3" stroke-linejoin="round">es</text>
<text x="1002" y="917" font-family="Liberation Sans" font-size="19" fill="#6a6a6a" paint-order="stroke" stroke="#ffffff" stroke-width="3" stroke-linejoin="round" textLength="87" lengthAdjust="spacingAndGlyphs">Beeches</text>
<polygon points="362.0,223.0 388.0,215.0 517.0,215.0 362.0,263.6" fill="#729f6e" stroke="#232323" stroke-width="1.1" stroke-linejoin="miter"/>
<polygon points="1018.5,215.0 1155.0,215.0 1155.0,223.0 1027.7,254.0" fill="#729f6e" stroke="#232323" stroke-width="1.1" stroke-linejoin="miter"/>
<polygon points="1324.7,245.2 1370.0,245.2 1370.0,319.6 1324.7,319.6" fill="#729f6e" stroke="#232323" stroke-width="1.1" stroke-linejoin="miter"/>
<polygon points="362.0,491.0 375.8,489.0 385.7,524.5 514.3,493.0 548.0,615.5 362.0,657.0" fill="#729f6e" stroke="#232323" stroke-width="1.1" stroke-linejoin="miter"/>
<polygon points="556.5,543.6 613.0,542.2 613.8,574.0 638.0,574.0 640.0,653.4 559.2,655.5" fill="#729f6e" stroke="#232323" stroke-width="1.1" stroke-linejoin="miter"/>
<polygon points="780.0,367.5 866.0,387.0 913.3,397.7 933.0,418.7 925.0,439.8 910.7,454.2 768.0,425.3" fill="#729f6e" stroke="#232323" stroke-width="1.1" stroke-linejoin="miter"/>
<polygon points="768.0,425.3 874.0,447.8 863.0,495.0 757.6,474.0" fill="#729f6e" stroke="#232323" stroke-width="1.1" stroke-linejoin="miter"/>
<polygon points="757.6,474.0 863.0,495.0 852.3,546.2 747.0,526.0" fill="#729f6e" stroke="#232323" stroke-width="1.1" stroke-linejoin="miter"/>
<polygon points="747.0,526.0 852.3,546.2 839.5,602.2 736.6,582.0" fill="#729f6e" stroke="#232323" stroke-width="1.1" stroke-linejoin="miter"/>
<polygon points="736.6,582.0 839.5,602.2 827.3,653.4 724.8,635.6" fill="#729f6e" stroke="#232323" stroke-width="1.1" stroke-linejoin="miter"/>
<polygon points="994.8,513.4 1217.0,470.0 1244.5,583.8 1054.0,614.0 1056.6,646.9 954.0,650.8 945.4,560.0 1000.0,549.6" fill="#729f6e" stroke="#232323" stroke-width="1.1" stroke-linejoin="miter"/>
<polygon points="1370.0,629.8 1346.5,689.0 1370.0,696.0" fill="#729f6e" stroke="#232323" stroke-width="1.1" stroke-linejoin="miter"/>
<polygon points="362.0,777.0 388.3,777.0 391.0,1018.3 362.0,1018.3" fill="#729f6e" stroke="#232323" stroke-width="1.1" stroke-linejoin="miter"/>
<polygon points="389.6,885.0 512.4,883.4 514.0,1017.0 391.0,1018.3" fill="#729f6e" stroke="#232323" stroke-width="1.1" stroke-linejoin="miter"/>
<polygon points="555.2,783.6 693.2,778.3 694.5,829.0 695.9,898.7 559.0,901.3" fill="#729f6e" stroke="#232323" stroke-width="1.1" stroke-linejoin="miter"/>
<polygon points="559.0,901.3 667.0,900.0 664.3,960.4 611.7,961.8 609.0,996.0 582.8,996.5" fill="#729f6e" stroke="#232323" stroke-width="1.1" stroke-linejoin="miter"/>
<polygon points="693.2,778.3 768.0,776.5 772.0,952.6 697.2,954.6" fill="#729f6e" stroke="#232323" stroke-width="1.1" stroke-linejoin="miter"/>
<polygon points="768.0,776.5 835.2,774.4 839.0,951.0 772.0,952.6" fill="#729f6e" stroke="#232323" stroke-width="1.1" stroke-linejoin="miter"/>
<polygon points="835.2,774.4 907.0,772.6 910.7,906.5 876.5,906.5 876.5,948.6 839.0,951.0" fill="#729f6e" stroke="#232323" stroke-width="1.1" stroke-linejoin="miter"/>
<polygon points="907.0,772.6 964.6,773.2 968.5,829.8 994.0,829.2 995.2,872.2 968.5,872.6 968.5,898.7 955.4,898.7 955.4,930.2 912.0,931.5" fill="#729f6e" stroke="#232323" stroke-width="1.1" stroke-linejoin="miter"/>
<polygon points="1010.6,809.8 1090.3,812.3 1085.5,940.7 1058.0,940.7 1056.6,967.0 1004.5,965.7" fill="#729f6e" stroke="#232323" stroke-width="1.1" stroke-linejoin="miter"/>
<polygon points="1058.0,940.7 1104.0,942.6 1100.0,1028.8 1054.0,1027.5" fill="#729f6e" stroke="#232323" stroke-width="1.1" stroke-linejoin="miter"/>
<polygon points="1063.7,1043.8 1096.0,1045.0 1102.6,1112.4 1069.0,1114.8" fill="#729f6e" stroke="#232323" stroke-width="1.1" stroke-linejoin="miter"/>
<polygon points="1171.0,798.0 1257.7,817.5 1205.0,1049.8 1127.0,1028.8" fill="#729f6e" stroke="#232323" stroke-width="1.1" stroke-linejoin="miter"/>
<polygon points="1257.7,817.5 1309.0,829.5 1276.0,976.2 1324.0,986.7 1310.3,1073.5 1205.0,1049.8" fill="#729f6e" stroke="#232323" stroke-width="1.1" stroke-linejoin="miter"/>
<polygon points="1310.3,1074.0 1343.0,1070.8 1348.4,1123.4 1315.5,1127.4" fill="#729f6e" stroke="#232323" stroke-width="1.1" stroke-linejoin="miter"/>
<polyline points="362.0,445.0 401.4,445.8 828.6,537.8 1370.0,380.0" fill="none" stroke="#6c8794" stroke-width="1.1" stroke-linejoin="round" />
<polyline points="362.0,748.0 769.5,775.7 866.0,782.0 1370.0,816.5" fill="none" stroke="#6c8794" stroke-width="1.1" stroke-linejoin="round" />
<polyline points="362.0,954.0 601.0,1137.0" fill="none" stroke="#6c8794" stroke-width="1.1" stroke-linejoin="round" />
<polyline points="1370.0,1090.6 1088.0,1080.0 1205.0,1137.0" fill="none" stroke="#6c8794" stroke-width="1.1" stroke-linejoin="round" />
<polyline points="362.0,244.0 454.0,215.0" fill="none" stroke="#e4508a" stroke-width="2.2" stroke-linejoin="round" />
<polyline points="362.0,594.3 471.0,568.8" fill="none" stroke="#e4508a" stroke-width="2.2" stroke-linejoin="round" />
<polyline points="585.4,570.6 585.4,603.5 600.0,615.3" fill="none" stroke="#e4508a" stroke-width="2.2" stroke-linejoin="round" />
<polyline points="801.0,403.0 866.0,416.0 901.5,425.3" fill="none" stroke="#e4508a" stroke-width="2.2" stroke-linejoin="round" />
<polyline points="786.5,454.2 845.7,466.0" fill="none" stroke="#e4508a" stroke-width="2.2" stroke-linejoin="round" />
<polyline points="777.3,504.2 832.6,516.0" fill="none" stroke="#e4508a" stroke-width="2.2" stroke-linejoin="round" />
<polyline points="768.0,558.8 819.4,568.8" fill="none" stroke="#e4508a" stroke-width="2.2" stroke-linejoin="round" />
<polyline points="756.3,613.5 809.0,623.2" fill="none" stroke="#e4508a" stroke-width="2.2" stroke-linejoin="round" />
<polyline points="997.4,600.3 1002.7,600.3 1014.5,583.8 1042.7,579.3 1059.2,556.2 1175.0,536.5" fill="none" stroke="#e4508a" stroke-width="2.2" stroke-linejoin="round" />
<polyline points="1360.0,282.0 1370.0,282.0" fill="none" stroke="#e4508a" stroke-width="2.2" stroke-linejoin="round" />
<polyline points="362.0,934.0 376.5,947.3 377.0,1005.0" fill="none" stroke="#e4508a" stroke-width="2.2" stroke-linejoin="round" />
<polyline points="451.4,944.7 451.4,957.8" fill="none" stroke="#e4508a" stroke-width="2.2" stroke-linejoin="round" />
<polyline points="615.7,840.8 635.4,840.8 647.2,829.0 660.4,813.8" fill="none" stroke="#e4508a" stroke-width="2.2" stroke-linejoin="round" />
<polyline points="635.4,840.8 667.0,871.0" fill="none" stroke="#e4508a" stroke-width="2.2" stroke-linejoin="round" />
<polyline points="636.7,930.7 597.3,930.7 590.7,940.7 594.7,981.5" fill="none" stroke="#e4508a" stroke-width="2.2" stroke-linejoin="round" />
<polyline points="731.3,813.8 734.0,917.0" fill="none" stroke="#e4508a" stroke-width="2.2" stroke-linejoin="round" />
<polyline points="802.3,807.2 805.0,919.7" fill="none" stroke="#e4508a" stroke-width="2.2" stroke-linejoin="round" />
<polyline points="871.0,810.0 873.9,869.7 866.0,877.6 856.2,888.0 857.5,931.5" fill="none" stroke="#e4508a" stroke-width="2.2" stroke-linejoin="round" />
<polyline points="937.3,801.2 939.2,842.9 949.7,852.0 975.0,851.3" fill="none" stroke="#e4508a" stroke-width="2.2" stroke-linejoin="round" />
<polyline points="939.2,842.9 940.0,870.2 932.0,877.4 933.0,910.5" fill="none" stroke="#e4508a" stroke-width="2.2" stroke-linejoin="round" />
<polyline points="1049.3,849.4 1048.0,900.0 1033.0,913.0 1031.6,940.7" fill="none" stroke="#e4508a" stroke-width="2.2" stroke-linejoin="round" />
<polyline points="1084.2,959.7 1079.5,963.6 1077.6,1006.4" fill="none" stroke="#e4508a" stroke-width="2.2" stroke-linejoin="round" />
<polyline points="1081.0,1059.8 1084.2,1098.5" fill="none" stroke="#e4508a" stroke-width="2.2" stroke-linejoin="round" />
<polyline points="1205.0,851.3 1175.0,1000.0" fill="none" stroke="#e4508a" stroke-width="2.2" stroke-linejoin="round" />
<polyline points="1277.4,848.7 1243.2,996.0 1257.7,1017.0 1274.8,1021.0" fill="none" stroke="#e4508a" stroke-width="2.2" stroke-linejoin="round" />
<polyline points="1327.4,1088.0 1330.8,1110.3" fill="none" stroke="#e4508a" stroke-width="2.2" stroke-linejoin="round" />
</svg></div><div class="t" style="left:1379.0px;top:218.0px;font-size:13px;line-height:13px;color:#232627;transform:scaleX(0.965);transform-origin:0 0;">Processing Toolbox</div>
<svg class="a" style="left:1893px;top:219px" width="26" height="12"><rect x="0.5" y="0.5" width="10" height="11" rx="2.5" fill="none" stroke="#6a6a6a"/><rect x="2.5" y="4.5" width="4" height="4" rx="1" fill="none" stroke="#6a6a6a"/><path d="M4.5 4.5V2.5H8.5V6.5H6.5" fill="none" stroke="#6a6a6a"/><rect x="14.5" y="0.5" width="10" height="11" rx="2.5" fill="none" stroke="#6a6a6a"/><path d="M16.8 3L22.2 9M22.2 3L16.8 9" stroke="#555" stroke-width="1.8"/></svg><div class="a" style="left:1375px;top:265px;width:545px;height:25px;background:#fff;border:1px solid #b8b8b8;border-radius:3px"></div><svg class="a" style="left:1382px;top:269px" width="16" height="16"><circle cx="6.5" cy="6.5" r="4.5" fill="none" stroke="#777" stroke-width="1.3"/><path d="M10 10L13.5 13.5" stroke="#777" stroke-width="1.5"/></svg><div class="t" style="left:1404.3px;top:271.3px;font-size:13px;line-height:13px;color:#232627;transform:scaleX(0.967);transform-origin:0 0;">mediala</div>
<svg class="a" style="left:1897px;top:270px" width="16" height="14"><path d="M1 7L5 2H15V12H5Z" fill="#8a8a8a"/><path d="M8 4.5L12 9.5M12 4.5L8 9.5" stroke="#fff" stroke-width="1.5"/></svg><div class="a" style="left:1375px;top:291px;width:545px;height:846px;background:#fff;border:1px solid #b8b8b8"></div><div class="a" style="left:1376px;top:310px;width:543px;height:19px;background:#308cc6"></div><svg class="a" style="left:1381px;top:296px" width="10" height="8"><path d="M1 2H9L5 6Z" fill="#555"/></svg><svg class="a" style="left:1381px;top:334px" width="10" height="8"><path d="M1 2H9L5 6Z" fill="#555"/></svg><svg class="a" style="left:1399px;top:292px" width="17" height="17"><circle cx="8" cy="8" r="6.8" fill="#f4f4f4" stroke="#8a8a8a" stroke-width="1.3"/><path d="M8 3.5V8.5L11 10.5" fill="none" stroke="#8a8a8a" stroke-width="1.3"/></svg><div class="t" style="left:1421.3px;top:294.7px;font-size:13px;line-height:13px;color:#232627;transform:scaleX(0.938);transform-origin:0 0;">Recently used</div>
<svg class="a" style="left:1420px;top:312px" width="15" height="15"><polygon points="14.50,7.50 12.30,9.49 12.45,12.45 9.49,12.30 7.50,14.50 5.51,12.30 2.55,12.45 2.70,9.49 0.50,7.50 2.70,5.51 2.55,2.55 5.51,2.70 7.50,0.50 9.49,2.70 12.45,2.55 12.30,5.51" fill="#c8d6ef"/><circle cx="7.5" cy="7.5" r="2.4" fill="#e8eef8"/></svg><div class="t" style="left:1441.0px;top:313.3px;font-size:13px;line-height:13px;color:#ffffff;transform:scaleX(0.978);transform-origin:0 0;">Approximate medial axis</div>
<svg class="a" style="left:1399px;top:330px" width="17" height="17"><circle cx="7.5" cy="7.5" r="5.2" fill="none" stroke="#589632" stroke-width="3"/><path d="M9.5 9.5L15 15" stroke="#589632" stroke-width="3.2"/><circle cx="8.8" cy="8.8" r="1.8" fill="#ee7913"/></svg><div class="t" style="left:1421.3px;top:332.6px;font-size:13px;line-height:13px;color:#232627;transform:scaleX(0.993);transform-origin:0 0;">Vector geometry</div>
<svg class="a" style="left:1420px;top:350px" width="15" height="15"><polygon points="14.50,7.50 12.30,9.49 12.45,12.45 9.49,12.30 7.50,14.50 5.51,12.30 2.55,12.45 2.70,9.49 0.50,7.50 2.70,5.51 2.55,2.55 5.51,2.70 7.50,0.50 9.49,2.70 12.45,2.55 12.30,5.51" fill="#5b8ad6"/><circle cx="7.5" cy="7.5" r="2.4" fill="#dfe9f8"/></svg><div class="t" style="left:1441.0px;top:351.2px;font-size:13px;line-height:13px;color:#232627;transform:scaleX(0.978);transform-origin:0 0;">Approximate medial axis</div>
<div class="t" style="left:1130.8px;top:1146.7px;font-size:11px;line-height:11px;color:#232627;transform:scaleX(0.873);transform-origin:0 0;">Coordinate</div>
<div class="a" style="left:1181px;top:1142px;width:104px;height:21px;background:#fff;border:1px solid #b8b8b8;border-radius:3px"></div><div class="t" style="left:1185.4px;top:1146.9px;font-size:11px;line-height:11px;color:#232627;transform:scaleX(0.832);transform-origin:0 0;">322045.05, 129688.67</div>
<div class="t" style="left:1318.0px;top:1146.7px;font-size:11px;line-height:11px;color:#232627;transform:scaleX(0.763);transform-origin:0 0;">Scale</div>
<div class="a" style="left:1343px;top:1141px;width:87px;height:24px;background:#fff;border:1px solid #b8b8b8;border-radius:3px"></div><div class="a" style="left:1410px;top:1142px;width:1px;height:22px;background:#cfcfcf"></div><svg class="a" style="left:1413px;top:1148px" width="12" height="10"><path d="M2 3H10L6 7Z" fill="#555"/></svg><div class="t" style="left:1347.7px;top:1146.9px;font-size:11px;line-height:11px;color:#232627;transform:scaleX(0.836);transform-origin:0 0;">1:307</div>
<svg class="a" style="left:1442px;top:1144px" width="14" height="18"><path d="M3.5 8V5.5A3.5 3.5 0 0 1 10.5 5.5V8" fill="none" stroke="#555" stroke-width="1.6"/><rect x="1.5" y="8" width="11" height="8.5" rx="1" fill="#555"/></svg><div class="t" style="left:1464.0px;top:1147.2px;font-size:11px;line-height:11px;color:#232627;transform:scaleX(0.895);transform-origin:0 0;">Magnifier</div>
<div class="a" style="left:1508px;top:1142px;width:86px;height:23px;background:#fff;border:1px solid #b8b8b8;border-radius:3px"></div><div class="a" style="left:1579px;top:1143px;width:1px;height:21px;background:#d4d4d4"></div><svg class="a" style="left:1581px;top:1144px" width="11" height="18"><path d="M2 7L5.5 3L9 7M2 11L5.5 15L9 11" fill="none" stroke="#666" stroke-width="1.3"/></svg><div class="t" style="left:1513.0px;top:1147.2px;font-size:11px;line-height:11px;color:#232627;transform:scaleX(0.800);transform-origin:0 0;">100%</div>
<div class="t" style="left:1604.0px;top:1147.2px;font-size:11px;line-height:11px;color:#232627;transform:scaleX(0.867);transform-origin:0 0;">Rotation</div>
<div class="a" style="left:1649px;top:1142px;width:86px;height:23px;background:#fff;border:1px solid #b8b8b8;border-radius:3px"></div><div class="a" style="left:1721px;top:1143px;width:1px;height:21px;background:#d4d4d4"></div><svg class="a" style="left:1723px;top:1144px" width="11" height="18"><path d="M2 7L5.5 3L9 7M2 11L5.5 15L9 11" fill="none" stroke="#666" stroke-width="1.3"/></svg><div class="t" style="left:1654.0px;top:1146.9px;font-size:11px;line-height:11px;color:#232627;transform:scaleX(0.967);transform-origin:0 0;">0.0 °</div>
<div class="a" style="left:1743px;top:1146px;width:14px;height:14px;background:#fff;border:1px solid #b8b0a8;border-radius:1px"></div><svg class="a" style="left:1743px;top:1146px" width="14" height="14"><path d="M3 7.2L6 11.2L11 3" fill="none" stroke="#000" stroke-width="2" stroke-linejoin="miter"/></svg><div class="t" style="left:1761.0px;top:1146.7px;font-size:11px;line-height:11px;color:#232627;transform:scaleX(0.832);transform-origin:0 0;">Render</div>
<svg class="a" style="left:1807px;top:1145px" width="16" height="16"><circle cx="8" cy="8" r="6.5" fill="none" stroke="#666" stroke-width="1.2"/><ellipse cx="8" cy="8" rx="3" ry="6.5" fill="none" stroke="#666" stroke-width="1"/><path d="M1.5 8H14.5M2.5 4.5H13.5M2.5 11.5H13.5" stroke="#666" stroke-width="1"/></svg><div class="t" style="left:1825.3px;top:1147.2px;font-size:11px;line-height:11px;color:#232627;transform:scaleX(0.779);transform-origin:0 0;">EPSG:27700</div>
<svg class="a" style="left:1896px;top:1144px" width="18" height="18"><path d="M9 2C13.5 2 17 4.8 17 8.3S13.5 14.6 9 14.6C8 14.6 7 14.4 6.2 14.2L2 16.5L3.3 12.8C1.8 11.6 1 10 1 8.3 1 4.8 4.5 2 9 2Z" fill="#555"/></svg><svg class="a" style="left:1288px;top:1144px" width="17" height="18"><path d="M3 5C3 2 7 1 9 3L12 6C14 8 13 12 10 13L6 12C3 11 2 8 3 5Z" fill="#444"/><circle cx="8" cy="7" r="2.2" fill="#ddd"/><path d="M12 2L15 1M13 4L16 3" stroke="#444"/></svg></body></html>
